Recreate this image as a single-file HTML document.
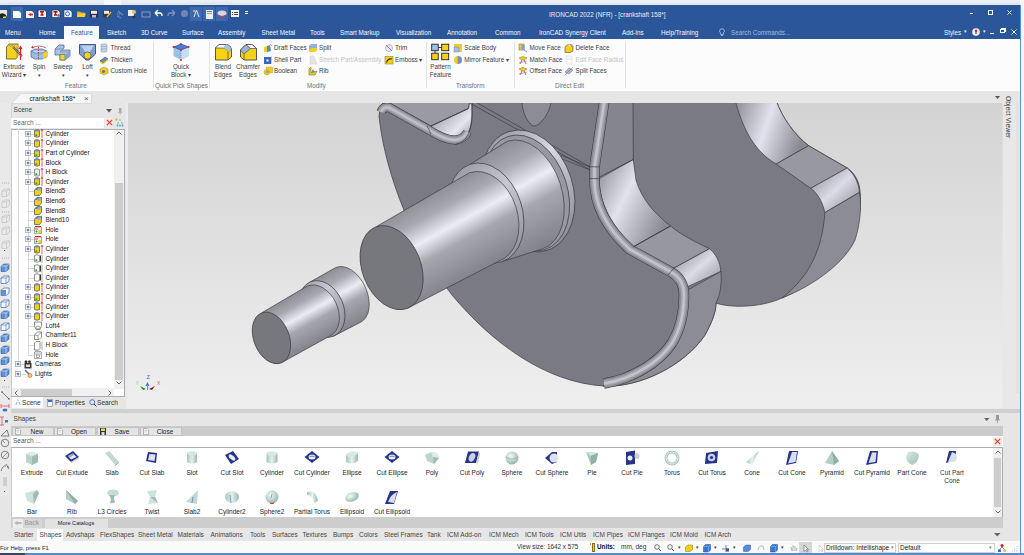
<!DOCTYPE html>
<html><head><meta charset="utf-8">
<style>
*{margin:0;padding:0;box-sizing:border-box}
html,body{width:1024px;height:555px;overflow:hidden;background:#e6e6e6;font-family:"Liberation Sans",sans-serif;font-size:6.2px;color:#333}
.a{position:absolute}
.t{position:absolute;white-space:nowrap;line-height:10px}
svg{overflow:visible}
</style></head><body>
<div class="a" style="left:0px;top:0px;width:1024px;height:5px;background:linear-gradient(#eef2f6,#dce4ec);"></div><div class="a" style="left:104px;top:0px;width:17px;height:4.5px;background:#f6f8fa;"></div><div class="a" style="left:0px;top:5px;width:1020px;height:34px;background:#2b579a;"></div><div class="a" style="left:1020px;top:0px;width:4px;height:555px;background:#f3f5f7;"></div><div class="a" style="left:1020px;top:5px;width:1px;height:550px;background:#5b8fd4;"></div><div class="a" style="left:11px;top:6.5px;width:12px;height:14.5px;background:#3d6aae;"></div><div class="a" style="left:190px;top:6.5px;width:12px;height:14.5px;background:#3d6aae;"></div><div class="a" style="left:203px;top:6.5px;width:12px;height:14.5px;background:#3d6aae;"></div><div class="a" style="left:216px;top:6.5px;width:12px;height:14.5px;background:#3d6aae;"></div><svg class="a" style="left:0px;top:10px;" width="7" height="8" viewBox="0 0 7 8"><rect x="0" y="0" width="7" height="8" fill="#e8e4d8"/><path d="M0 4 Q3 2 6 5 L7 8 H0Z" fill="#222"/><rect x="3" y="6.5" width="3" height="1.5" fill="#e8c840"/></svg><svg class="a" style="left:13px;top:10.5px;" width="8" height="7" viewBox="0 0 8 7"><path d="M0 0 H6 L8 2 V7 H0Z" fill="#fafafa"/></svg><svg class="a" style="left:26px;top:10.5px;" width="8" height="7" viewBox="0 0 8 7"><path d="M0 0 H6 L8 2 V7 H0Z" fill="#f2eee8"/><path d="M2 3.5 L5 2 V5Z" fill="#e02020"/><rect x="4.5" y="2.8" width="2.5" height="1.5" fill="#e02020"/></svg><svg class="a" style="left:38px;top:10px;" width="8.5" height="7.5" viewBox="0 0 8.5 7.5"><path d="M0 0 H6.5 L8.5 2 V7.5 H0Z" fill="#fafafa" stroke="#1c2a70" stroke-width="0.8"/><path d="M2 1.8 H6 M4 1.8 V5 M2.5 5 H5.5" stroke="#b01010" stroke-width="1.4"/></svg><svg class="a" style="left:51.5px;top:10px;" width="8" height="7.5" viewBox="0 0 8 7.5"><path d="M0 0 H6 L8 2 V7.5 H0Z" fill="#f4f4f4" stroke="#1c2a70" stroke-width="0.6"/><path d="M1.5 1.8 H5.5 M3.5 1.8 V5 M2 5 H5" stroke="#b01010" stroke-width="1.4"/><circle cx="6.5" cy="5.5" r="1.3" fill="#666"/></svg><svg class="a" style="left:64px;top:10px;" width="8" height="7.5" viewBox="0 0 8 7.5"><path d="M0 0 H6 L8 2 V7.5 H0Z" fill="#f4f6fa" stroke="#1c2a70" stroke-width="0.6"/><circle cx="3.5" cy="3.8" r="2" fill="none" stroke="#2a6ad8" stroke-width="1"/></svg><svg class="a" style="left:76.5px;top:11px;" width="9" height="6" viewBox="0 0 9 6"><path d="M0 0.5 H3 L4 1.5 H7.5 V6 H0Z" fill="#d8b020"/><path d="M1 2.5 H9 L7.5 6 H0Z" fill="#f6d030"/></svg><svg class="a" style="left:90px;top:10px;" width="8" height="7.5" viewBox="0 0 8 7.5"><rect x="0" y="0" width="8" height="7.5" fill="#2a2f55"/><rect x="1" y="0.8" width="6" height="3" fill="#f0f0f0"/><rect x="2" y="5" width="4" height="2.5" fill="#bbb"/></svg><svg class="a" style="left:103px;top:10px;" width="8" height="7.5" viewBox="0 0 8 7.5"><rect x="0" y="0" width="7" height="7.5" fill="#3a3a48"/><rect x="1" y="0.8" width="5" height="3" fill="#f0f0f0"/><path d="M4 7 L8 2" stroke="#e8c030" stroke-width="1.4"/></svg><svg class="a" style="left:116px;top:9.5px;" width="8" height="9" viewBox="0 0 8 9"><path d="M2 1 L7 5 M1 6 L5 8" stroke="#6f86bc" stroke-width="1.3"/><circle cx="2.5" cy="4" r="1.3" fill="none" stroke="#6f86bc" stroke-width="0.7"/></svg><svg class="a" style="left:128px;top:9px;" width="10" height="10" viewBox="0 0 10 10"><rect x="0" y="1" width="6" height="6" fill="#e8eef6"/><circle cx="6" cy="3" r="2" fill="#f0c040"/><circle cx="6" cy="8" r="1.5" fill="#333"/></svg><svg class="a" style="left:142px;top:10px;" width="9" height="8" viewBox="0 0 9 8"><rect x="0" y="2" width="8" height="5" fill="none" stroke="#8a9cbc" stroke-width="1"/></svg><svg class="a" style="left:154px;top:9px;" width="9" height="9" viewBox="0 0 9 9"><path d="M1 4 L4 1 M1 4 L4 7 M1 4 H6 Q8 4 8 7" fill="none" stroke="#fff" stroke-width="1.3"/></svg><svg class="a" style="left:167px;top:9px;" width="9" height="9" viewBox="0 0 9 9"><path d="M8 4 L5 1 M8 4 L5 7 M8 4 H3 Q1 4 1 7" fill="none" stroke="#7b93bd" stroke-width="1.3"/></svg><svg class="a" style="left:180px;top:9px;" width="9" height="9" viewBox="0 0 9 9"><circle cx="4.5" cy="4.5" r="3.5" fill="#6f86ae"/></svg><svg class="a" style="left:193px;top:9px;" width="7" height="9" viewBox="0 0 7 9"><path d="M3.5 1 L1 8 M3.5 1 L6 8" stroke="#dfe8f4" stroke-width="1" fill="none"/><circle cx="1" cy="2" r="1" fill="#f5c542"/></svg><div class="a" style="left:206px;top:9.5px;width:7px;height:9px;background:#eeeeee;"></div><div class="a" style="left:207px;top:11px;width:5px;height:1px;background:#777;"></div><div class="a" style="left:207px;top:13px;width:5px;height:1px;background:#999;"></div><svg class="a" style="left:217px;top:9px;" width="10" height="9" viewBox="0 0 10 9"><ellipse cx="5" cy="4.5" rx="4.5" ry="3" fill="#cfd8ea"/><path d="M1 6 Q5 9 9 6" stroke="#d33" stroke-width="1.2" fill="none"/></svg><div class="a" style="left:231px;top:10px;width:8px;height:7px;background:#f2f2f2;"></div><div class="a" style="left:232px;top:12px;width:1px;height:1px;background:#444;"></div><div class="a" style="left:234px;top:12px;width:4px;height:1px;background:#444;"></div><div class="a" style="left:232px;top:14px;width:1px;height:1px;background:#444;"></div><div class="a" style="left:234px;top:14px;width:4px;height:1px;background:#444;"></div><div class="a" style="left:245px;top:11px;width:3px;height:1px;background:#fff;"></div><div class="a" style="left:245px;top:13px;width:3px;height:1px;background:#fff;"></div><div class="t" style="left:549px;top:10.0px;color:#e6ecf5;font-size:6.3px;">IRONCAD 2022 (NFR) - [crankshaft 158*]</div><div class="a" style="left:969.5px;top:13px;width:3.5px;height:1px;background:#fff;"></div><div class="a" style="left:987.5px;top:9.5px;width:5.5px;height:5px;border:1px solid #fff"></div><svg class="a" style="left:1006.5px;top:10px;" width="5" height="5" viewBox="0 0 5 5"><path d="M0.5 0.5 L4.5 4.5 M4.5 0.5 L0.5 4.5" stroke="#fff" stroke-width="0.9"/></svg><div class="a" style="left:63.5px;top:25.5px;width:35px;height:13.5px;background:#fcfcfc;"></div><div class="t" style="left:5px;top:27.5px;color:#f6f8fc;font-size:6.3px;">Menu</div><div class="t" style="left:39px;top:27.5px;color:#f6f8fc;font-size:6.3px;">Home</div><div class="t" style="left:107px;top:27.5px;color:#f6f8fc;font-size:6.3px;">Sketch</div><div class="t" style="left:141px;top:27.5px;color:#f6f8fc;font-size:6.3px;">3D Curve</div><div class="t" style="left:182px;top:27.5px;color:#f6f8fc;font-size:6.3px;">Surface</div><div class="t" style="left:218px;top:27.5px;color:#f6f8fc;font-size:6.3px;">Assembly</div><div class="t" style="left:261.5px;top:27.5px;color:#f6f8fc;font-size:6.3px;">Sheet Metal</div><div class="t" style="left:310px;top:27.5px;color:#f6f8fc;font-size:6.3px;">Tools</div><div class="t" style="left:340px;top:27.5px;color:#f6f8fc;font-size:6.3px;">Smart Markup</div><div class="t" style="left:396px;top:27.5px;color:#f6f8fc;font-size:6.3px;">Visualization</div><div class="t" style="left:447px;top:27.5px;color:#f6f8fc;font-size:6.3px;">Annotation</div><div class="t" style="left:495px;top:27.5px;color:#f6f8fc;font-size:6.3px;">Common</div><div class="t" style="left:539px;top:27.5px;color:#f6f8fc;font-size:6.3px;">IronCAD Synergy Client</div><div class="t" style="left:622px;top:27.5px;color:#f6f8fc;font-size:6.3px;">Add-Ins</div><div class="t" style="left:661px;top:27.5px;color:#f6f8fc;font-size:6.3px;">Help/Training</div><div class="t" style="left:71px;top:27.5px;color:#2b579a;font-size:6.3px;">Feature</div><svg class="a" style="left:719px;top:28px;" width="6" height="9" viewBox="0 0 6 9"><path d="M3 0.8 A2.2 2.2 0 0 1 4.6 4.7 L4.3 6.5 H1.7 L1.4 4.7 A2.2 2.2 0 0 1 3 0.8 Z M2 7.5 H4" fill="none" stroke="#cbd6e8" stroke-width="0.7"/></svg><div class="t" style="left:731px;top:27.5px;color:#aabbd6;font-size:6.3px;">Search Commands...</div><div class="t" style="left:944px;top:27.5px;color:#eef2f8;font-size:6.3px;">Styles</div><div class="t" style="left:964px;top:26.0px;color:#eef2f8;font-size:5px;">▾</div><svg class="a" style="left:972px;top:28px;" width="8" height="8" viewBox="0 0 8 8"><circle cx="4" cy="4" r="3.8" fill="#f4f4f4"/><path d="M4 2 V6" stroke="#d22" stroke-width="1.3"/><circle cx="4" cy="2.8" r="1.3" fill="#d22"/></svg><div class="t" style="left:983px;top:26.0px;color:#eef2f8;font-size:5px;">▾</div><div class="a" style="left:990px;top:33px;width:4px;height:1px;background:#fff;"></div><div class="a" style="left:1000px;top:29px;width:5px;height:4px;border:1px solid #fff;box-shadow:1px -1px 0 0 #fff"></div><svg class="a" style="left:1011px;top:29px;" width="6" height="6" viewBox="0 0 6 6"><path d="M0.5 0.5 L5.5 5.5 M5.5 0.5 L0.5 5.5" stroke="#fff" stroke-width="1"/></svg><div class="a" style="left:0px;top:39px;width:1020px;height:52px;background:#fcfcfc;"></div><div class="a" style="left:152.5px;top:42px;width:1px;height:46px;background:#e2e2e2;"></div><div class="a" style="left:208.5px;top:42px;width:1px;height:46px;background:#e2e2e2;"></div><div class="a" style="left:425.5px;top:42px;width:1px;height:46px;background:#e2e2e2;"></div><div class="a" style="left:513.5px;top:42px;width:1px;height:46px;background:#e2e2e2;"></div><div class="a" style="left:624.7px;top:42px;width:1px;height:46px;background:#e2e2e2;"></div><div class="t" style="left:65px;top:80.5px;color:#707070;font-size:6.3px;">Feature</div><div class="t" style="left:155px;top:80.5px;color:#707070;font-size:6.3px;">Quick Pick Shapes</div><div class="t" style="left:307px;top:80.5px;color:#707070;font-size:6.3px;">Modify</div><div class="t" style="left:456px;top:80.5px;color:#707070;font-size:6.3px;">Transform</div><div class="t" style="left:555px;top:80.5px;color:#707070;font-size:6.3px;">Direct Edit</div><svg class="a" style="left:5px;top:43px;" width="20" height="18" viewBox="0 0 20 18"><path d="M1.5 4 L4 1 H13 V13 L11 16 H1.5 Z" fill="#f6d117" stroke="#5a5030" stroke-width="0.8"/><path d="M11 4 V16 L13 13 V1 Z" fill="#d9b514"/><path d="M4 1 L5.5 4 L7 2 L8.5 4 L10 2" stroke="#9c9ca8" fill="none" stroke-width="0.8"/><path d="M8 4 L17 13" stroke="#555" stroke-width="2"/><path d="M8 4 L17 13" stroke="#aaa" stroke-width="0.8"/><path d="M15.5 17 V4" stroke="#e02020" stroke-width="1.2"/><path d="M13.5 6 L15.5 2.5 L17.5 6 Z" fill="#e02020"/></svg><svg class="a" style="left:30px;top:44px;" width="18" height="17" viewBox="0 0 18 17"><path d="M2 4 Q9 0 16 4" stroke="#c96a5a" stroke-width="1" fill="none"/><path d="M1 3.5 L3 1.8 L3.5 4.5Z" fill="#c02020"/><path d="M1 7 L5 5 H12 L17 7 V13 L12 15 H5 L1 13 Z" fill="#9cbde2" stroke="#4a5f88" stroke-width="0.7"/><path d="M1 7 L5 9 H12 L17 7" fill="#c6daf2" stroke="#4a5f88" stroke-width="0.6"/><path d="M13 9 L17 7 V13 L13 15Z" fill="#f2d020"/><path d="M8.5 3 V16" stroke="#b03030" stroke-width="0.8" stroke-dasharray="1.5 1"/></svg><svg class="a" style="left:54px;top:43px;" width="18" height="18" viewBox="0 0 18 18"><path d="M1 6 L5 2 H10 V5 L8 7 H16 V13 L11 17 H6 V12 H1 Z" fill="#a9c4e6" stroke="#4a5f88" stroke-width="0.7"/><path d="M1 6 H9 L6 9 H16" fill="none" stroke="#6b82aa" stroke-width="0.6"/><rect x="6" y="11.5" width="5" height="5.5" fill="#f5d320" stroke="#4a5f88" stroke-width="0.6"/><path d="M11 12 L16 8 V13 L11 17Z" fill="#7fa2d2"/></svg><svg class="a" style="left:78px;top:43px;" width="19" height="18" viewBox="0 0 19 18"><path d="M1.5 1.5 H17.5 V11 L11 17 H8 L1.5 11 Z" fill="#7da0d0" stroke="#3a4a74" stroke-width="0.9"/><path d="M3 2.5 H16 L10.5 11 H8.5 Z" fill="#b9d3ef"/><circle cx="9.5" cy="12.5" r="3.6" fill="#f5d320" stroke="#3a4a74" stroke-width="0.7"/></svg><svg class="a" style="left:172px;top:43px;" width="18" height="18" viewBox="0 0 18 18"><path d="M1.5 4 L9 1 L16.5 4 V13 L9 17 L1.5 13 Z" fill="#9cc0ea"/><path d="M9 7 V17 L16.5 13 V4Z" fill="#c9ddf4"/><path d="M1.5 4 L9 1 L16.5 4 L9 7 Z" fill="#4f7cd0" stroke="#243d78" stroke-width="0.6"/><circle cx="1.5" cy="4" r="1" fill="#e02020"/><circle cx="9" cy="1" r="1" fill="#e02020"/><circle cx="16.5" cy="4" r="1" fill="#e02020"/><circle cx="9" cy="7" r="1" fill="#e02020"/><circle cx="9" cy="17" r="1" fill="#e02020"/><path d="M9 8 V16" stroke="#4a6db0" stroke-width="0.6" stroke-dasharray="1 1"/></svg><svg class="a" style="left:214px;top:43px;" width="19" height="18" viewBox="0 0 19 18"><path d="M1.5 5 L5 1.5 H12 Q17.5 2 17.5 8 V14 L14 17 H1.5 Z" fill="#f6d117" stroke="#333" stroke-width="0.8"/><path d="M1.5 5 L5 1.5 H12 Q16 2 17 6 L14 9.5 Q13 5 9 5 Z" fill="#fff" stroke="#333" stroke-width="0.6"/><path d="M9 5 Q13 5 14 9.5 L17 6 Q16 2 12 1.5 Z" fill="#a7c4e4"/><path d="M14 9.5 V17" stroke="#333" stroke-width="0.6"/></svg><svg class="a" style="left:239px;top:43px;" width="19" height="18" viewBox="0 0 19 18"><path d="M1.5 7 L7 1.5 H13 L17.5 5.5 V17 H5 L1.5 14 Z" fill="#f6d117" stroke="#333" stroke-width="0.8"/><path d="M1.5 7 L7 1.5 L11.5 5.5 L5 11 Z" fill="#98b7dc" stroke="#333" stroke-width="0.6"/><path d="M7 1.5 H13 L17.5 5.5 H11.5 Z" fill="#fff" stroke="#333" stroke-width="0.6"/><path d="M5 11 V17" stroke="#333" stroke-width="0.6"/></svg><svg class="a" style="left:431px;top:43px;" width="19" height="18" viewBox="0 0 19 18"><rect x="0.7" y="1.2" width="6.5" height="6.5" fill="#9fc0e6" stroke="#222" stroke-width="0.9"/><rect x="10.7" y="1.2" width="7" height="6.5" fill="#f6d117" stroke="#222" stroke-width="0.9"/><rect x="0.7" y="10.2" width="6.5" height="6.5" fill="#f6d117" stroke="#222" stroke-width="0.9"/><rect x="10.7" y="10.2" width="7" height="6.5" fill="#f6d117" stroke="#222" stroke-width="0.9"/><path d="M7.2 4.5 H10.7 M4 7.7 V10.2" stroke="#222" stroke-width="0.9"/></svg><div class="t" style="left:-86px;width:200px;text-align:center;top:61.8px;color:#3c3c3c;font-size:6.3px;">Extrude</div><div class="t" style="left:-86px;width:200px;text-align:center;top:69.6px;color:#3c3c3c;font-size:6.3px;">Wizard ▾</div><div class="t" style="left:-61px;width:200px;text-align:center;top:61.8px;color:#3c3c3c;font-size:6.3px;">Spin</div><div class="t" style="left:-61px;width:200px;text-align:center;top:69.6px;color:#3c3c3c;font-size:5px;">▾</div><div class="t" style="left:-37px;width:200px;text-align:center;top:61.8px;color:#3c3c3c;font-size:6.3px;">Sweep</div><div class="t" style="left:-37px;width:200px;text-align:center;top:69.6px;color:#3c3c3c;font-size:5px;">▾</div><div class="t" style="left:-12.5px;width:200px;text-align:center;top:61.8px;color:#3c3c3c;font-size:6.3px;">Loft</div><div class="t" style="left:-12.5px;width:200px;text-align:center;top:69.6px;color:#3c3c3c;font-size:5px;">▾</div><div class="t" style="left:81px;width:200px;text-align:center;top:61.8px;color:#3c3c3c;font-size:6.3px;">Quick</div><div class="t" style="left:81px;width:200px;text-align:center;top:69.6px;color:#3c3c3c;font-size:6.3px;">Block ▾</div><div class="t" style="left:123px;width:200px;text-align:center;top:61.8px;color:#3c3c3c;font-size:6.3px;">Blend</div><div class="t" style="left:123px;width:200px;text-align:center;top:69.6px;color:#3c3c3c;font-size:6.3px;">Edges</div><div class="t" style="left:148px;width:200px;text-align:center;top:61.8px;color:#3c3c3c;font-size:6.3px;">Chamfer</div><div class="t" style="left:148px;width:200px;text-align:center;top:69.6px;color:#3c3c3c;font-size:6.3px;">Edges</div><div class="t" style="left:340.5px;width:200px;text-align:center;top:61.8px;color:#3c3c3c;font-size:6.3px;">Pattern</div><div class="t" style="left:340.5px;width:200px;text-align:center;top:69.6px;color:#3c3c3c;font-size:6.3px;">Feature</div><svg class="a" style="left:100px;top:43.8px;" width="8" height="8" viewBox="0 0 8 8"><rect x="1" y="0" width="6" height="8" rx="1" fill="#c8d6e8" stroke="#8aa0c0" stroke-width="0.6"/><path d="M1 2.5H7M1 5H7" stroke="#8aa0c0" stroke-width="0.6"/></svg><div class="t" style="left:110.5px;top:42.8px;color:#3c3c3c;font-size:6.3px;">Thread</div><svg class="a" style="left:100px;top:55.6px;" width="8" height="8" viewBox="0 0 8 8"><path d="M0 5 L5 1 L8 3 L3 7Z" fill="#6b88c0" stroke="#334" stroke-width="0.5"/><path d="M0 5 L3 7 L8 3 V4.5 L3 8.5 L0 6.5Z" fill="#f2cf1a"/></svg><div class="t" style="left:110.5px;top:54.6px;color:#3c3c3c;font-size:6.3px;">Thicken</div><svg class="a" style="left:100px;top:67.3px;" width="8" height="8" viewBox="0 0 8 8"><path d="M0 2 L4 0 L8 2 V6 L4 8 L0 6Z" fill="#f2cf1a" stroke="#a88a10" stroke-width="0.5"/><circle cx="3.5" cy="4.5" r="1.6" fill="#4a78c0"/></svg><div class="t" style="left:110.5px;top:66.3px;color:#3c3c3c;font-size:6.3px;">Custom Hole</div><svg class="a" style="left:263.5px;top:43.8px;" width="8" height="8" viewBox="0 0 8 8"><path d="M0 3 L3 2 V8 H0Z" fill="#f2cf1a"/><path d="M3 2 L6 1 L7 7 L3 8Z" fill="#5f86c8"/><path d="M6 0 L8 2" stroke="#e04040" stroke-width="0.6"/></svg><div class="t" style="left:274.0px;top:42.8px;color:#3c3c3c;font-size:6.3px;">Draft Faces</div><svg class="a" style="left:263.5px;top:55.6px;" width="8" height="8" viewBox="0 0 8 8"><rect x="0" y="1" width="7" height="7" fill="#3a66b8"/><rect x="2.5" y="3.5" width="2" height="2" fill="#fff"/><path d="M7 1 L8 0 V7 L7 8Z" fill="#f2cf1a"/></svg><div class="t" style="left:274.0px;top:54.6px;color:#3c3c3c;font-size:6.3px;">Shell Part</div><svg class="a" style="left:263.5px;top:67.3px;" width="8" height="8" viewBox="0 0 8 8"><rect x="2.5" y="0" width="6" height="6" fill="#f2cf1a" stroke="#a88a10" stroke-width="0.4"/><circle cx="2.8" cy="5.2" r="2.8" fill="#f2cf1a" stroke="#a88a10" stroke-width="0.4"/><circle cx="3.3" cy="4.8" r="1.4" fill="#7aa0d8"/></svg><div class="t" style="left:274.0px;top:66.3px;color:#3c3c3c;font-size:6.3px;">Boolean</div><svg class="a" style="left:308.5px;top:43.8px;" width="8" height="8" viewBox="0 0 8 8"><path d="M0 2 L2 0 H8 V6 L6 8 H0Z" fill="#8fb0e0"/><path d="M0 5 Q3 3.5 8 4 V6 L6 8 H0Z" fill="#f2cf1a"/></svg><div class="t" style="left:319.0px;top:42.8px;color:#3c3c3c;font-size:6.3px;">Split</div><svg class="a" style="left:308.5px;top:55.6px;" width="8" height="8" viewBox="0 0 8 8"><path d="M1 0 H5 L8 8 H1Z" fill="#e4e4e4" stroke="#d0d0d0" stroke-width="0.5"/></svg><div class="t" style="left:319.0px;top:54.6px;color:#c4c4c4;font-size:6.3px;">Stretch Part/Assembly</div><svg class="a" style="left:308.5px;top:67.3px;" width="8" height="8" viewBox="0 0 8 8"><path d="M0 8 V2 L2 0 V6 L8 4 L6 8Z" fill="#f2cf1a" stroke="#6a5a20" stroke-width="0.5"/><path d="M2 6 L4 2 L6 5Z" fill="#6a8ad0"/></svg><div class="t" style="left:319.0px;top:66.3px;color:#3c3c3c;font-size:6.3px;">Rib</div><svg class="a" style="left:384.5px;top:43.8px;" width="8" height="8" viewBox="0 0 8 8"><circle cx="4" cy="4" r="3.5" fill="#e8eef6" stroke="#8a98b0" stroke-width="0.6"/><path d="M1 1 L7 7" stroke="#c03030" stroke-width="0.7"/></svg><div class="t" style="left:395.0px;top:42.8px;color:#3c3c3c;font-size:6.3px;">Trim</div><svg class="a" style="left:384.5px;top:55.6px;" width="8" height="8" viewBox="0 0 8 8"><rect x="0" y="0.5" width="8" height="7.5" fill="#f2cf1a" stroke="#8a7010" stroke-width="0.5"/><path d="M1.5 6.5 Q3 2 7 3" stroke="#333" stroke-width="1.2" fill="none"/></svg><div class="t" style="left:395.0px;top:54.6px;color:#3c3c3c;font-size:6.3px;">Emboss  ▾</div><svg class="a" style="left:453.8px;top:43.8px;" width="8" height="8" viewBox="0 0 8 8"><rect x="0" y="0" width="8" height="8" fill="#f2cf1a"/><rect x="0" y="3" width="5" height="5" fill="#9fc0e6" stroke="#5a7ab0" stroke-width="0.4"/></svg><div class="t" style="left:464.3px;top:42.8px;color:#3c3c3c;font-size:6.3px;">Scale Body</div><svg class="a" style="left:453.8px;top:55.6px;" width="8" height="8" viewBox="0 0 8 8"><path d="M4 0 A4 4 0 0 0 4 8Z" fill="#f2cf1a"/><path d="M4 0 A4 4 0 0 1 4 8Z" fill="#6f94cc"/><path d="M4 0 V8" stroke="#c07070" stroke-width="0.6"/></svg><div class="t" style="left:464.3px;top:54.6px;color:#3c3c3c;font-size:6.3px;">Mirror Feature  ▾</div><svg class="a" style="left:519px;top:43.8px;" width="8" height="8" viewBox="0 0 8 8"><rect x="0" y="0" width="5" height="6" fill="#f2cf1a" stroke="#5a6a90" stroke-width="0.5"/><rect x="2.5" y="1" width="3" height="5" fill="#7aa0d8"/><path d="M5 6 L8 8" stroke="#c04040" stroke-width="0.7"/></svg><div class="t" style="left:529.5px;top:42.8px;color:#3c3c3c;font-size:6.3px;">Move Face</div><svg class="a" style="left:519px;top:55.6px;" width="8" height="8" viewBox="0 0 8 8"><path d="M0 2 Q4 -1 8 2 L5 4 H3Z" fill="#f2cf1a" stroke="#6a5a20" stroke-width="0.4"/><path d="M3 4 L1 8 M5 4 L7 8" stroke="#c03030" stroke-width="0.8"/><path d="M0 7 L8 5" stroke="#6a8ad0" stroke-width="0.6"/></svg><div class="t" style="left:529.5px;top:54.6px;color:#3c3c3c;font-size:6.3px;">Match Face</div><svg class="a" style="left:519px;top:67.3px;" width="8" height="8" viewBox="0 0 8 8"><path d="M0 2 Q4 -1 8 2 L5 4 H3Z" fill="#f2cf1a" stroke="#6a5a20" stroke-width="0.4"/><path d="M3 4 L1 8 M5 4 L7 8" stroke="#c03030" stroke-width="0.8"/><path d="M0 7 L8 5" stroke="#6a8ad0" stroke-width="0.6"/></svg><div class="t" style="left:529.5px;top:66.3px;color:#3c3c3c;font-size:6.3px;">Offset Face</div><svg class="a" style="left:565px;top:43.8px;" width="8" height="8" viewBox="0 0 8 8"><path d="M0 3 L3 0.5 H7 L8 2 V7 L5 8.5 H0Z" fill="#f2cf1a" stroke="#333" stroke-width="0.5"/><path d="M3 0.5 L6 0 L8 2 L5 3Z" fill="#e0e0e0"/><path d="M5 0 L7 3" stroke="#c03030" stroke-width="0.7"/></svg><div class="t" style="left:575.5px;top:42.8px;color:#3c3c3c;font-size:6.3px;">Delete Face</div><svg class="a" style="left:565px;top:55.6px;" width="8" height="8" viewBox="0 0 8 8"><rect x="1" y="0" width="6" height="8" rx="1.5" fill="none" stroke="#d8d8d8" stroke-width="0.7"/><path d="M1 3H7" stroke="#d8d8d8" stroke-width="0.6"/></svg><div class="t" style="left:575.5px;top:54.6px;color:#c4c4c4;font-size:6.3px;">Edit Face Radius</div><svg class="a" style="left:565px;top:67.3px;" width="8" height="8" viewBox="0 0 8 8"><path d="M0 5 L4 1 L8 3 L4 7Z" fill="#9fb8dc" stroke="#5a70a0" stroke-width="0.5"/><path d="M0 8 L8 0" stroke="#e04040" stroke-width="0.6"/></svg><div class="t" style="left:575.5px;top:66.3px;color:#3c3c3c;font-size:6.3px;">Split Faces</div><div class="a" style="left:0px;top:92px;width:1020px;height:463px;background:#e6e6e6;"></div><svg class="a" style="left:11px;top:93px;" width="82" height="11" viewBox="0 0 82 11"><path d="M0.5 10.5 L10 0.5 H80.5 V10.5 Z" fill="#f7f7f7" stroke="#d6d6d6" stroke-width="0.8"/></svg><div class="t" style="left:29.5px;top:93.7px;color:#1a1a1a;font-size:6.6px;">crankshaft 158*</div><div class="t" style="left:84px;top:93.5px;color:#555;font-size:8px;">×</div><div class="a" style="left:0px;top:103px;width:11px;height:393px;background:#e9e9e9;"></div><div class="a" style="left:10.5px;top:103px;width:0.6px;height:393px;background:#d6d6d6;"></div><svg class="a" style="left:1px;top:182px;" width="9" height="2" viewBox="0 0 9 2"><path d="M1 1 H8" stroke="#9a9a9a" stroke-width="0.7" stroke-dasharray="1 1"/></svg><svg class="a" style="left:1px;top:188px;" width="9" height="9" viewBox="0 0 9 9"><path d="M1 3 L4 1 H8.5 V6 L5.5 8.5 H1 Z M1 3 H5.5 V8.5 M5.5 3 L8.5 1" fill="none" stroke="#c4c4c4" stroke-width="0.7"/></svg><svg class="a" style="left:1px;top:199px;" width="9" height="9" viewBox="0 0 9 9"><path d="M1 3 L4 1 H8.5 V6 L5.5 8.5 H1 Z M1 3 H5.5 V8.5 M5.5 3 L8.5 1" fill="none" stroke="#c4c4c4" stroke-width="0.7"/></svg><svg class="a" style="left:1px;top:211px;" width="9" height="2" viewBox="0 0 9 2"><path d="M1 1 H8" stroke="#9a9a9a" stroke-width="0.7" stroke-dasharray="1 1"/></svg><svg class="a" style="left:1px;top:214px;" width="9" height="9" viewBox="0 0 9 9"><path d="M1 3 L4 1 H8.5 V6 L5.5 8.5 H1 Z M1 3 H5.5 V8.5 M5.5 3 L8.5 1" fill="none" stroke="#c4c4c4" stroke-width="0.7"/></svg><svg class="a" style="left:1px;top:226px;" width="9" height="9" viewBox="0 0 9 9"><path d="M1 3 L4 1 H8.5 V6 L5.5 8.5 H1 Z M1 3 H5.5 V8.5 M5.5 3 L8.5 1" fill="none" stroke="#c4c4c4" stroke-width="0.7"/></svg><svg class="a" style="left:1px;top:240px;" width="9" height="9" viewBox="0 0 9 9"><path d="M1 3 L4 1 H8.5 V6 L5.5 8.5 H1 Z M1 3 H5.5 V8.5 M5.5 3 L8.5 1" fill="none" stroke="#c4c4c4" stroke-width="0.7"/></svg><div class="a" style="left:4px;top:250px;width:1px;height:1px;background:#555;"></div><svg class="a" style="left:1px;top:257px;" width="9" height="2" viewBox="0 0 9 2"><path d="M1 1 H8" stroke="#9a9a9a" stroke-width="0.7" stroke-dasharray="1 1"/></svg><svg class="a" style="left:0px;top:263px;" width="10" height="9" viewBox="0 0 10 9"><path d="M1 3 L4 1 H9 V6 L6 8.5 H1 Z" fill="#5d90d8" stroke="#2e5aa0" stroke-width="0.6"/><path d="M1 3 H6 V8.5 M6 3 L9 1" stroke="#e8f0fa" stroke-width="0.6" fill="none"/></svg><svg class="a" style="left:0px;top:275px;" width="10" height="9" viewBox="0 0 10 9"><path d="M1 3 L4 1 H9 V6 L6 8.5 H1 Z" fill="#f4f8fc" stroke="#3e6ab0" stroke-width="0.7"/><path d="M1 3 H6 V8.5 M6 3 L9 1" stroke="#3e6ab0" stroke-width="0.6" fill="none"/></svg><svg class="a" style="left:0px;top:287px;" width="10" height="9" viewBox="0 0 10 9"><path d="M1 3 L4 1 H9 V6 L6 8.5 H1 Z" fill="#f4f8fc" stroke="#3e6ab0" stroke-width="0.7"/><path d="M1 3 H6 V8.5 H1Z" fill="#5d90d8"/></svg><svg class="a" style="left:0px;top:299px;" width="10" height="9" viewBox="0 0 10 9"><path d="M1 3 L4 1 H9 V6 L6 8.5 H1 Z" fill="#f4f8fc" stroke="#3e6ab0" stroke-width="0.7"/><path d="M1 3 H6 V8.5 M6 3 L9 1" stroke="#3e6ab0" stroke-width="0.6" fill="none"/></svg><svg class="a" style="left:0px;top:310px;" width="10" height="9" viewBox="0 0 10 9"><path d="M1 3 L4 1 H9 V6 L6 8.5 H1 Z" fill="#5d90d8" stroke="#2e5aa0" stroke-width="0.6"/><path d="M1 3 H6 V8.5 M6 3 L9 1" stroke="#e8f0fa" stroke-width="0.6" fill="none"/></svg><svg class="a" style="left:0px;top:322px;" width="10" height="9" viewBox="0 0 10 9"><path d="M1 3 L4 1 H9 V6 L6 8.5 H1 Z" fill="#f4f8fc" stroke="#3e6ab0" stroke-width="0.7"/><path d="M1 3 H6 V8.5 M6 3 L9 1" stroke="#3e6ab0" stroke-width="0.6" fill="none"/></svg><svg class="a" style="left:0px;top:333px;" width="10" height="9" viewBox="0 0 10 9"><path d="M1 3 L4 1 H9 V6 L6 8.5 H1 Z" fill="#5d90d8" stroke="#2e5aa0" stroke-width="0.6"/><path d="M1 3 H6 V8.5 M6 3 L9 1" stroke="#e8f0fa" stroke-width="0.6" fill="none"/></svg><svg class="a" style="left:0px;top:345px;" width="10" height="9" viewBox="0 0 10 9"><path d="M1 3 L4 1 H9 V6 L6 8.5 H1 Z" fill="#5d90d8" stroke="#2e5aa0" stroke-width="0.6"/><path d="M1 3 H6 V8.5 M6 3 L9 1" stroke="#e8f0fa" stroke-width="0.6" fill="none"/></svg><svg class="a" style="left:0px;top:356px;" width="10" height="9" viewBox="0 0 10 9"><path d="M1 3 L4 1 H9 V6 L6 8.5 H1 Z" fill="#5d90d8" stroke="#2e5aa0" stroke-width="0.6"/><path d="M1 3 H6 V8.5 M6 3 L9 1" stroke="#e8f0fa" stroke-width="0.6" fill="none"/></svg><svg class="a" style="left:0px;top:368px;" width="10" height="9" viewBox="0 0 10 9"><path d="M1 3 L4 1 H9 V6 L6 8.5 H1 Z" fill="#5d90d8" stroke="#2e5aa0" stroke-width="0.6"/><path d="M1 3 H6 V8.5 M6 3 L9 1" stroke="#e8f0fa" stroke-width="0.6" fill="none"/></svg><div class="a" style="left:4px;top:380px;width:1px;height:1px;background:#555;"></div><svg class="a" style="left:1px;top:386px;" width="9" height="2" viewBox="0 0 9 2"><path d="M1 1 H8" stroke="#9a9a9a" stroke-width="0.7" stroke-dasharray="1 1"/></svg><svg class="a" style="left:1px;top:391px;" width="9" height="9" viewBox="0 0 9 9"><path d="M1 1 L8 8" stroke="#555" stroke-width="0.8"/><circle cx="1" cy="1" r="0.8" fill="#555"/><circle cx="8" cy="8" r="0.8" fill="#555"/></svg><svg class="a" style="left:0px;top:404px;" width="10" height="9" viewBox="0 0 10 9"><path d="M1 2 H9 M1 0 V4 M9 0 V4" stroke="#e04040" stroke-width="0.7"/><ellipse cx="5" cy="6" rx="2.5" ry="1.5" fill="#3a78d0"/></svg><svg class="a" style="left:0px;top:416px;" width="10" height="10" viewBox="0 0 10 10"><path d="M2 1 V9 M0 1 H4 M0 9 H4" stroke="#e04040" stroke-width="0.7"/><rect x="5" y="4" width="3" height="2.5" fill="#3a78d0"/></svg><svg class="a" style="left:0px;top:428px;" width="10" height="9" viewBox="0 0 10 9"><path d="M1 8 L7 2 L9 8 Z" fill="none" stroke="#555" stroke-width="0.7"/></svg><svg class="a" style="left:0px;top:438px;" width="10" height="10" viewBox="0 0 10 10"><circle cx="5" cy="5" r="3.8" fill="none" stroke="#555" stroke-width="0.7"/><path d="M2.5 2.5 L5 5" stroke="#555" stroke-width="0.6"/></svg><svg class="a" style="left:0px;top:450px;" width="10" height="10" viewBox="0 0 10 10"><circle cx="5" cy="5" r="3.8" fill="none" stroke="#555" stroke-width="0.7"/><path d="M2.3 7.7 L7.7 2.3" stroke="#555" stroke-width="0.6"/></svg><svg class="a" style="left:0px;top:463px;" width="10" height="9" viewBox="0 0 10 9"><path d="M1 8 Q3 2 6 3" stroke="#555" fill="none" stroke-width="0.7"/><path d="M6 1 L9 6 M7 4 H9" stroke="#333" stroke-width="0.6"/></svg><div class="a" style="left:3px;top:477px;width:4px;height:9px;background:#cfcfcf;"></div><div class="a" style="left:4px;top:491px;width:1px;height:1px;background:#555;"></div><div class="t" style="left:13.5px;top:105.3px;color:#444;font-size:6.6px;">Scene</div><svg class="a" style="left:106px;top:109px;" width="6" height="4" viewBox="0 0 6 4"><path d="M0 0 H6 L3 3.5 Z" fill="#555"/></svg><svg class="a" style="left:117.5px;top:107.5px;" width="4" height="7" viewBox="0 0 4 7"><rect x="1" y="0" width="2.5" height="4.5" fill="#aaa"/><path d="M2.2 4.5 V7 M0 4.5 H4.5" stroke="#aaa" stroke-width="0.7"/></svg><div class="a" style="left:11px;top:117.5px;width:93px;height:10px;background:#ffffff;"></div><div class="t" style="left:13px;top:117.5px;color:#666;font-size:6.5px;">Search ...</div><div class="a" style="left:104.5px;top:117.5px;width:8.5px;height:10px;background:#f3ebe4;"></div><svg class="a" style="left:105.5px;top:119px;" width="7" height="7" viewBox="0 0 7 7"><path d="M0.8 0.8 L6.2 6.2 M6.2 0.8 L0.8 6.2" stroke="#e83a3a" stroke-width="1.2"/></svg><svg class="a" style="left:115px;top:118px;" width="8" height="9" viewBox="0 0 8 9"><circle cx="1.5" cy="1.5" r="1.2" fill="#f0c020"/><path d="M5 1 V3 M3.5 4 L2.5 6.5 M6.5 4 L7.5 6.5" stroke="#5ab0c0" stroke-width="0.8"/><circle cx="2.5" cy="7.5" r="1" fill="#5ab0c0"/><circle cx="5" cy="7.5" r="1" fill="#5ab0c0"/><circle cx="7.5" cy="7.5" r="1" fill="#5ab0c0"/></svg><div class="a" style="left:11px;top:128.5px;width:114px;height:268.5px;background:#fff;border:1px solid #a9adbb;border-left-color:#c8c8c8"></div><div class="a" style="left:113.5px;top:129.5px;width:10.5px;height:259px;background:#f0f0f0;"></div><div class="a" style="left:115px;top:183px;width:8px;height:197px;background:#cdcdcd;"></div><svg class="a" style="left:116px;top:131px;" width="6" height="4" viewBox="0 0 6 4"><path d="M0.5 3.5 L3 1 L5.5 3.5" stroke="#555" stroke-width="0.9" fill="none"/></svg><svg class="a" style="left:116px;top:381px;" width="6" height="4" viewBox="0 0 6 4"><path d="M0.5 0.5 L3 3 L5.5 0.5" stroke="#555" stroke-width="0.9" fill="none"/></svg><div class="a" style="left:12px;top:388px;width:101.5px;height:8px;background:#f0f0f0;"></div><div class="a" style="left:21px;top:388.5px;width:51px;height:7px;background:#cdcdcd;"></div><svg class="a" style="left:14px;top:389.5px;" width="4" height="6" viewBox="0 0 4 6"><path d="M3.5 0.5 L1 3 L3.5 5.5" stroke="#555" stroke-width="0.9" fill="none"/></svg><svg class="a" style="left:108px;top:389.5px;" width="4" height="6" viewBox="0 0 4 6"><path d="M0.5 0.5 L3 3 L0.5 5.5" stroke="#555" stroke-width="0.9" fill="none"/></svg><div class="a" style="left:18px;top:129px;width:1px;height:235px;background:#dcdcdc;"></div><div class="a" style="left:28px;top:129px;width:1px;height:225px;background:#dcdcdc;"></div><svg class="a" style="left:25px;top:131px;" width="7" height="7" viewBox="0 0 7 7"><rect x="0.5" y="0.5" width="5" height="5" fill="#fff" stroke="#a8a8a8" stroke-width="0.8"/><path d="M1.5 3 H4.5 M3 1.5 V4.5" stroke="#2d5bb0" stroke-width="0.9"/></svg><div class="a" style="left:31px;top:134px;width:4px;height:1px;background:#d6d6d6;"></div><svg class="a" style="left:34px;top:129.3px;" width="10" height="10" viewBox="0 0 10 10"><path d="M0.5 1.5 Q3 0 5.5 1.5 V7.5 Q3 9 0.5 7.5 Z" fill="#f2cf1a" stroke="#333" stroke-width="0.6"/><ellipse cx="3" cy="1.5" rx="2.5" ry="1" fill="#6a8ad0"/><circle cx="2.3" cy="6.3" r="1" fill="#2ca02c"/><path d="M8 9 V0.5 M7 2 L8 0 L9 2" stroke="#e02020" stroke-width="0.7" fill="none"/></svg><div class="t" style="left:45.5px;top:128.8px;color:#141414;font-size:6.4px;">Cylinder</div><svg class="a" style="left:25px;top:140px;" width="7" height="7" viewBox="0 0 7 7"><rect x="0.5" y="0.5" width="5" height="5" fill="#fff" stroke="#a8a8a8" stroke-width="0.8"/><path d="M1.5 3 H4.5 M3 1.5 V4.5" stroke="#2d5bb0" stroke-width="0.9"/></svg><div class="a" style="left:31px;top:143px;width:4px;height:1px;background:#d6d6d6;"></div><svg class="a" style="left:34px;top:138.9px;" width="10" height="10" viewBox="0 0 10 10"><path d="M0.5 1.5 Q3 0 5.5 1.5 V7.5 Q3 9 0.5 7.5 Z" fill="#f2cf1a" stroke="#333" stroke-width="0.6"/><ellipse cx="3" cy="1.5" rx="2.5" ry="1" fill="#6a8ad0"/><path d="M8 9 V0.5 M7 2 L8 0 L9 2" stroke="#e02020" stroke-width="0.7" fill="none"/></svg><div class="t" style="left:45.5px;top:138.4px;color:#141414;font-size:6.4px;">Cylinder</div><svg class="a" style="left:25px;top:150px;" width="7" height="7" viewBox="0 0 7 7"><rect x="0.5" y="0.5" width="5" height="5" fill="#fff" stroke="#a8a8a8" stroke-width="0.8"/><path d="M1.5 3 H4.5 M3 1.5 V4.5" stroke="#2d5bb0" stroke-width="0.9"/></svg><div class="a" style="left:31px;top:153px;width:4px;height:1px;background:#d6d6d6;"></div><svg class="a" style="left:34px;top:148.5px;" width="10" height="10" viewBox="0 0 10 10"><path d="M0.5 1.5 Q3 0 5.5 1.5 V7.5 Q3 9 0.5 7.5 Z" fill="#f2cf1a" stroke="#333" stroke-width="0.6"/><ellipse cx="3" cy="1.5" rx="2.5" ry="1" fill="#6a8ad0"/><circle cx="2.3" cy="6.3" r="1" fill="#2ca02c"/><path d="M8 9 V0.5 M7 2 L8 0 L9 2" stroke="#e02020" stroke-width="0.7" fill="none"/></svg><div class="t" style="left:45.5px;top:148.0px;color:#141414;font-size:6.4px;">Part of Cylinder</div><svg class="a" style="left:25px;top:160px;" width="7" height="7" viewBox="0 0 7 7"><rect x="0.5" y="0.5" width="5" height="5" fill="#fff" stroke="#a8a8a8" stroke-width="0.8"/><path d="M1.5 3 H4.5 M3 1.5 V4.5" stroke="#2d5bb0" stroke-width="0.9"/></svg><div class="a" style="left:31px;top:163px;width:4px;height:1px;background:#d6d6d6;"></div><svg class="a" style="left:34px;top:158.10000000000002px;" width="10" height="10" viewBox="0 0 10 10"><path d="M0.5 1.5 Q3 0 5.5 1.5 V7.5 Q3 9 0.5 7.5 Z" fill="#f2cf1a" stroke="#333" stroke-width="0.6"/><ellipse cx="3" cy="1.5" rx="2.5" ry="1" fill="#6a8ad0"/><circle cx="2.3" cy="6.3" r="1" fill="#2ca02c"/><path d="M8 9 V0.5 M7 2 L8 0 L9 2" stroke="#e02020" stroke-width="0.7" fill="none"/></svg><div class="t" style="left:45.5px;top:157.60000000000002px;color:#141414;font-size:6.4px;">Block</div><svg class="a" style="left:25px;top:169px;" width="7" height="7" viewBox="0 0 7 7"><rect x="0.5" y="0.5" width="5" height="5" fill="#fff" stroke="#a8a8a8" stroke-width="0.8"/><path d="M1.5 3 H4.5 M3 1.5 V4.5" stroke="#2d5bb0" stroke-width="0.9"/></svg><div class="a" style="left:31px;top:172px;width:4px;height:1px;background:#d6d6d6;"></div><svg class="a" style="left:34px;top:167.70000000000002px;" width="10" height="10" viewBox="0 0 10 10"><path d="M0.5 1.5 Q3 0 5.5 1.5 V7.5 Q3 9 0.5 7.5 Z" fill="#e8e8e8" stroke="#555" stroke-width="0.6"/><circle cx="2.3" cy="6.3" r="1" fill="#2ca02c"/><path d="M8 9 V0.5 M7 2 L8 0 L9 2" stroke="#e02020" stroke-width="0.7" fill="none"/></svg><div class="t" style="left:45.5px;top:167.20000000000002px;color:#141414;font-size:6.4px;">H Block</div><svg class="a" style="left:25px;top:179px;" width="7" height="7" viewBox="0 0 7 7"><rect x="0.5" y="0.5" width="5" height="5" fill="#fff" stroke="#a8a8a8" stroke-width="0.8"/><path d="M1.5 3 H4.5 M3 1.5 V4.5" stroke="#2d5bb0" stroke-width="0.9"/></svg><div class="a" style="left:31px;top:182px;width:4px;height:1px;background:#d6d6d6;"></div><svg class="a" style="left:34px;top:177.3px;" width="10" height="10" viewBox="0 0 10 10"><path d="M0.5 1.5 Q3 0 5.5 1.5 V7.5 Q3 9 0.5 7.5 Z" fill="#f2cf1a" stroke="#333" stroke-width="0.6"/><ellipse cx="3" cy="1.5" rx="2.5" ry="1" fill="#6a8ad0"/><circle cx="2.3" cy="6.3" r="1" fill="#2ca02c"/><path d="M8 9 V0.5 M7 2 L8 0 L9 2" stroke="#e02020" stroke-width="0.7" fill="none"/></svg><div class="t" style="left:45.5px;top:176.8px;color:#141414;font-size:6.4px;">Cylinder</div><div class="a" style="left:28px;top:191px;width:6px;height:1px;background:#d6d6d6;"></div><svg class="a" style="left:34px;top:186.9px;" width="10" height="10" viewBox="0 0 10 10"><path d="M0.5 3 L3 0.5 H7.5 V6 L5.5 8.5 H0.5 Z" fill="#f2cf1a" stroke="#333" stroke-width="0.6"/><path d="M0.5 3 L3 0.5 H7.5 L5 3 Z" fill="#5a80c8"/><circle cx="5" cy="2.5" r="1.6" fill="#8fb0e0"/></svg><div class="t" style="left:45.5px;top:186.4px;color:#141414;font-size:6.4px;">Blend5</div><div class="a" style="left:28px;top:201px;width:6px;height:1px;background:#d6d6d6;"></div><svg class="a" style="left:34px;top:196.5px;" width="10" height="10" viewBox="0 0 10 10"><path d="M0.5 3 L3 0.5 H7.5 V6 L5.5 8.5 H0.5 Z" fill="#f2cf1a" stroke="#333" stroke-width="0.6"/><path d="M0.5 3 L3 0.5 H7.5 L5 3 Z" fill="#5a80c8"/><circle cx="5" cy="2.5" r="1.6" fill="#8fb0e0"/></svg><div class="t" style="left:45.5px;top:196.0px;color:#141414;font-size:6.4px;">Blend6</div><div class="a" style="left:28px;top:211px;width:6px;height:1px;background:#d6d6d6;"></div><svg class="a" style="left:34px;top:206.10000000000002px;" width="10" height="10" viewBox="0 0 10 10"><path d="M0.5 3 L3 0.5 H7.5 V6 L5.5 8.5 H0.5 Z" fill="#f2cf1a" stroke="#333" stroke-width="0.6"/><path d="M0.5 3 L3 0.5 H7.5 L5 3 Z" fill="#5a80c8"/><circle cx="5" cy="2.5" r="1.6" fill="#8fb0e0"/></svg><div class="t" style="left:45.5px;top:205.60000000000002px;color:#141414;font-size:6.4px;">Blend8</div><div class="a" style="left:28px;top:220px;width:6px;height:1px;background:#d6d6d6;"></div><svg class="a" style="left:34px;top:215.7px;" width="10" height="10" viewBox="0 0 10 10"><path d="M0.5 3 L3 0.5 H7.5 V6 L5.5 8.5 H0.5 Z" fill="#f2cf1a" stroke="#333" stroke-width="0.6"/><path d="M0.5 3 L3 0.5 H7.5 L5 3 Z" fill="#5a80c8"/><circle cx="5" cy="2.5" r="1.6" fill="#8fb0e0"/></svg><div class="t" style="left:45.5px;top:215.2px;color:#141414;font-size:6.4px;">Blend10</div><svg class="a" style="left:25px;top:227px;" width="7" height="7" viewBox="0 0 7 7"><rect x="0.5" y="0.5" width="5" height="5" fill="#fff" stroke="#a8a8a8" stroke-width="0.8"/><path d="M1.5 3 H4.5 M3 1.5 V4.5" stroke="#2d5bb0" stroke-width="0.9"/></svg><div class="a" style="left:31px;top:230px;width:4px;height:1px;background:#d6d6d6;"></div><svg class="a" style="left:34px;top:225.3px;" width="10" height="10" viewBox="0 0 10 10"><path d="M0.5 2 H7.5 V8.5 H0.5Z" fill="#f2f2f2" stroke="#555" stroke-width="0.5"/><path d="M1 1.5 H7" stroke="#d02020" stroke-width="1"/><path d="M1 4 H4" stroke="#d02020" stroke-width="0.8"/><rect x="4.5" y="5" width="2.5" height="3" fill="#f2cf1a"/><circle cx="2.5" cy="6.5" r="1" fill="#2ca02c"/></svg><div class="t" style="left:45.5px;top:224.8px;color:#141414;font-size:6.4px;">Hole</div><svg class="a" style="left:25px;top:236px;" width="7" height="7" viewBox="0 0 7 7"><rect x="0.5" y="0.5" width="5" height="5" fill="#fff" stroke="#a8a8a8" stroke-width="0.8"/><path d="M1.5 3 H4.5 M3 1.5 V4.5" stroke="#2d5bb0" stroke-width="0.9"/></svg><div class="a" style="left:31px;top:239px;width:4px;height:1px;background:#d6d6d6;"></div><svg class="a" style="left:34px;top:234.9px;" width="10" height="10" viewBox="0 0 10 10"><path d="M0.5 2 H7.5 V8.5 H0.5Z" fill="#f2f2f2" stroke="#555" stroke-width="0.5"/><path d="M1 1.5 H7" stroke="#d02020" stroke-width="1"/><path d="M1 4 H4" stroke="#d02020" stroke-width="0.8"/><rect x="4.5" y="5" width="2.5" height="3" fill="#f2cf1a"/><circle cx="2.5" cy="6.5" r="1" fill="#2ca02c"/></svg><div class="t" style="left:45.5px;top:234.4px;color:#141414;font-size:6.4px;">Hole</div><svg class="a" style="left:25px;top:246px;" width="7" height="7" viewBox="0 0 7 7"><rect x="0.5" y="0.5" width="5" height="5" fill="#fff" stroke="#a8a8a8" stroke-width="0.8"/><path d="M1.5 3 H4.5 M3 1.5 V4.5" stroke="#2d5bb0" stroke-width="0.9"/></svg><div class="a" style="left:31px;top:249px;width:4px;height:1px;background:#d6d6d6;"></div><svg class="a" style="left:34px;top:244.5px;" width="10" height="10" viewBox="0 0 10 10"><path d="M0.5 1.5 Q3 0 5.5 1.5 V7.5 Q3 9 0.5 7.5 Z" fill="#f2cf1a" stroke="#333" stroke-width="0.6"/><ellipse cx="3" cy="1.5" rx="2.5" ry="1" fill="#6a8ad0"/><circle cx="2.3" cy="6.3" r="1" fill="#2ca02c"/><path d="M8 9 V0.5 M7 2 L8 0 L9 2" stroke="#e02020" stroke-width="0.7" fill="none"/></svg><div class="t" style="left:45.5px;top:244.0px;color:#141414;font-size:6.4px;">Cylinder</div><div class="a" style="left:28px;top:259px;width:6px;height:1px;background:#d6d6d6;"></div><svg class="a" style="left:34px;top:254.10000000000002px;" width="10" height="10" viewBox="0 0 10 10"><path d="M0.5 1.5 Q3 0 5.5 1.5 V7.5 Q3 9 0.5 7.5 Z" fill="#fff" stroke="#444" stroke-width="0.6"/><circle cx="2.3" cy="6.3" r="1" fill="#2ca02c"/><path d="M6.5 1.5 V7.5" stroke="#333" stroke-width="1"/><path d="M8 9 V0.5" stroke="#555" stroke-width="0.5"/></svg><div class="t" style="left:45.5px;top:253.60000000000002px;color:#141414;font-size:6.4px;">Cylinder</div><div class="a" style="left:28px;top:268px;width:6px;height:1px;background:#d6d6d6;"></div><svg class="a" style="left:34px;top:263.70000000000005px;" width="10" height="10" viewBox="0 0 10 10"><path d="M0.5 1.5 Q3 0 5.5 1.5 V7.5 Q3 9 0.5 7.5 Z" fill="#fff" stroke="#444" stroke-width="0.6"/><circle cx="2.3" cy="6.3" r="1" fill="#2ca02c"/><path d="M6.5 1.5 V7.5" stroke="#333" stroke-width="1"/><path d="M8 9 V0.5" stroke="#555" stroke-width="0.5"/></svg><div class="t" style="left:45.5px;top:263.20000000000005px;color:#141414;font-size:6.4px;">Cylinder</div><div class="a" style="left:28px;top:278px;width:6px;height:1px;background:#d6d6d6;"></div><svg class="a" style="left:34px;top:273.3px;" width="10" height="10" viewBox="0 0 10 10"><path d="M0.5 1.5 Q3 0 5.5 1.5 V7.5 Q3 9 0.5 7.5 Z" fill="#fff" stroke="#444" stroke-width="0.6"/><path d="M6.5 1.5 V7.5" stroke="#333" stroke-width="1"/><path d="M8 9 V0.5" stroke="#555" stroke-width="0.5"/></svg><div class="t" style="left:45.5px;top:272.8px;color:#141414;font-size:6.4px;">Cylinder</div><svg class="a" style="left:25px;top:284px;" width="7" height="7" viewBox="0 0 7 7"><rect x="0.5" y="0.5" width="5" height="5" fill="#fff" stroke="#a8a8a8" stroke-width="0.8"/><path d="M1.5 3 H4.5 M3 1.5 V4.5" stroke="#2d5bb0" stroke-width="0.9"/></svg><div class="a" style="left:31px;top:287px;width:4px;height:1px;background:#d6d6d6;"></div><svg class="a" style="left:34px;top:282.9px;" width="10" height="10" viewBox="0 0 10 10"><path d="M0.5 1.5 Q3 0 5.5 1.5 V7.5 Q3 9 0.5 7.5 Z" fill="#f2cf1a" stroke="#333" stroke-width="0.6"/><ellipse cx="3" cy="1.5" rx="2.5" ry="1" fill="#6a8ad0"/><path d="M8 9 V0.5 M7 2 L8 0 L9 2" stroke="#e02020" stroke-width="0.7" fill="none"/></svg><div class="t" style="left:45.5px;top:282.4px;color:#141414;font-size:6.4px;">Cylinder</div><svg class="a" style="left:25px;top:294px;" width="7" height="7" viewBox="0 0 7 7"><rect x="0.5" y="0.5" width="5" height="5" fill="#fff" stroke="#a8a8a8" stroke-width="0.8"/><path d="M1.5 3 H4.5 M3 1.5 V4.5" stroke="#2d5bb0" stroke-width="0.9"/></svg><div class="a" style="left:31px;top:297px;width:4px;height:1px;background:#d6d6d6;"></div><svg class="a" style="left:34px;top:292.5px;" width="10" height="10" viewBox="0 0 10 10"><path d="M0.5 1.5 Q3 0 5.5 1.5 V7.5 Q3 9 0.5 7.5 Z" fill="#f2cf1a" stroke="#333" stroke-width="0.6"/><ellipse cx="3" cy="1.5" rx="2.5" ry="1" fill="#6a8ad0"/><circle cx="2.3" cy="6.3" r="1" fill="#2ca02c"/><path d="M8 9 V0.5 M7 2 L8 0 L9 2" stroke="#e02020" stroke-width="0.7" fill="none"/></svg><div class="t" style="left:45.5px;top:292.0px;color:#141414;font-size:6.4px;">Cylinder</div><svg class="a" style="left:25px;top:304px;" width="7" height="7" viewBox="0 0 7 7"><rect x="0.5" y="0.5" width="5" height="5" fill="#fff" stroke="#a8a8a8" stroke-width="0.8"/><path d="M1.5 3 H4.5 M3 1.5 V4.5" stroke="#2d5bb0" stroke-width="0.9"/></svg><div class="a" style="left:31px;top:307px;width:4px;height:1px;background:#d6d6d6;"></div><svg class="a" style="left:34px;top:302.1px;" width="10" height="10" viewBox="0 0 10 10"><path d="M0.5 1.5 Q3 0 5.5 1.5 V7.5 Q3 9 0.5 7.5 Z" fill="#f2cf1a" stroke="#333" stroke-width="0.6"/><ellipse cx="3" cy="1.5" rx="2.5" ry="1" fill="#6a8ad0"/><path d="M8 9 V0.5 M7 2 L8 0 L9 2" stroke="#e02020" stroke-width="0.7" fill="none"/></svg><div class="t" style="left:45.5px;top:301.6px;color:#141414;font-size:6.4px;">Cylinder</div><svg class="a" style="left:25px;top:313px;" width="7" height="7" viewBox="0 0 7 7"><rect x="0.5" y="0.5" width="5" height="5" fill="#fff" stroke="#a8a8a8" stroke-width="0.8"/><path d="M1.5 3 H4.5 M3 1.5 V4.5" stroke="#2d5bb0" stroke-width="0.9"/></svg><div class="a" style="left:31px;top:316px;width:4px;height:1px;background:#d6d6d6;"></div><svg class="a" style="left:34px;top:311.70000000000005px;" width="10" height="10" viewBox="0 0 10 10"><path d="M0.5 1.5 Q3 0 5.5 1.5 V7.5 Q3 9 0.5 7.5 Z" fill="#f2cf1a" stroke="#333" stroke-width="0.6"/><ellipse cx="3" cy="1.5" rx="2.5" ry="1" fill="#6a8ad0"/><path d="M8 9 V0.5 M7 2 L8 0 L9 2" stroke="#e02020" stroke-width="0.7" fill="none"/></svg><div class="t" style="left:45.5px;top:311.20000000000005px;color:#141414;font-size:6.4px;">Cylinder</div><div class="a" style="left:28px;top:326px;width:6px;height:1px;background:#d6d6d6;"></div><svg class="a" style="left:34px;top:321.3px;" width="10" height="10" viewBox="0 0 10 10"><path d="M0.5 1 H7.5 V5 L6 8.5 H2 L0.5 5Z" fill="#fff" stroke="#444" stroke-width="0.6"/><ellipse cx="4" cy="6.5" rx="2" ry="1.5" fill="none" stroke="#444" stroke-width="0.5"/></svg><div class="t" style="left:45.5px;top:320.8px;color:#141414;font-size:6.4px;">Loft4</div><div class="a" style="left:28px;top:335px;width:6px;height:1px;background:#d6d6d6;"></div><svg class="a" style="left:34px;top:330.9px;" width="10" height="10" viewBox="0 0 10 10"><path d="M0.5 4 L3.5 1 H7.5 V6 L5 8.5 H0.5Z" fill="#fff" stroke="#444" stroke-width="0.6"/><path d="M0.5 4 L4 4.5 L7.5 1 M4 4.5 V8.5" stroke="#444" stroke-width="0.5" fill="none"/></svg><div class="t" style="left:45.5px;top:330.4px;color:#141414;font-size:6.4px;">Chamfer11</div><div class="a" style="left:28px;top:345px;width:6px;height:1px;background:#d6d6d6;"></div><svg class="a" style="left:34px;top:340.5px;" width="10" height="10" viewBox="0 0 10 10"><path d="M0.5 2 L2 0.5 H6 V7.5 L4.5 9 H0.5Z" fill="#fff" stroke="#444" stroke-width="0.6"/><path d="M8 9 V0.5" stroke="#555" stroke-width="0.5"/></svg><div class="t" style="left:45.5px;top:340.0px;color:#141414;font-size:6.4px;">H Block</div><div class="a" style="left:28px;top:355px;width:6px;height:1px;background:#d6d6d6;"></div><svg class="a" style="left:34px;top:350.1px;" width="10" height="10" viewBox="0 0 10 10"><path d="M0.5 2 H7.5 V8.5 H0.5Z" fill="#fff" stroke="#555" stroke-width="0.5"/><path d="M1 1.2 H7 M1 4 H7" stroke="#555" stroke-width="0.5"/><rect x="2.5" y="5" width="3" height="2.5" fill="none" stroke="#555" stroke-width="0.5"/></svg><div class="t" style="left:45.5px;top:349.6px;color:#141414;font-size:6.4px;">Hole</div><svg class="a" style="left:15px;top:361px;" width="7" height="7" viewBox="0 0 7 7"><rect x="0.5" y="0.5" width="5" height="5" fill="#fff" stroke="#a8a8a8" stroke-width="0.8"/><path d="M1.5 3 H4.5 M3 1.5 V4.5" stroke="#2d5bb0" stroke-width="0.9"/></svg><div class="a" style="left:21px;top:364px;width:5px;height:1px;background:#d6d6d6;"></div><svg class="a" style="left:24px;top:359.7px;" width="10" height="10" viewBox="0 0 10 10"><rect x="0.5" y="3" width="7" height="5.5" fill="#3a3a3a"/><circle cx="2" cy="1.8" r="1.5" fill="#3a3a3a"/><circle cx="5.5" cy="1.8" r="1.5" fill="#3a3a3a"/><rect x="2" y="4.5" width="4" height="2.5" fill="#ddd"/></svg><div class="t" style="left:35px;top:359.2px;color:#141414;font-size:6.4px;">Cameras</div><svg class="a" style="left:15px;top:371px;" width="7" height="7" viewBox="0 0 7 7"><rect x="0.5" y="0.5" width="5" height="5" fill="#fff" stroke="#a8a8a8" stroke-width="0.8"/><path d="M1.5 3 H4.5 M3 1.5 V4.5" stroke="#2d5bb0" stroke-width="0.9"/></svg><div class="a" style="left:21px;top:374px;width:5px;height:1px;background:#d6d6d6;"></div><svg class="a" style="left:24px;top:369.3px;" width="10" height="10" viewBox="0 0 10 10"><path d="M1 1 L7 7" stroke="#4070c0" stroke-width="1.5"/><circle cx="6" cy="6.5" r="2" fill="#f0d050" stroke="#e04040" stroke-width="0.6"/></svg><div class="t" style="left:35px;top:368.8px;color:#141414;font-size:6.4px;">Lights</div><div class="a" style="left:11px;top:397px;width:115px;height:11.5px;background:#e6e6e6;"></div><div class="a" style="left:12px;top:397px;width:30.5px;height:11px;background:#ffffff;"></div><svg class="a" style="left:15px;top:399px;" width="6" height="7" viewBox="0 0 6 7"><path d="M3 0.5 V2.5 M2 3 L0.8 6 M4 3 L5.2 6" stroke="#5a8ac0" stroke-width="0.7"/></svg><div class="t" style="left:22px;top:398.0px;color:#333;font-size:6.6px;">Scene</div><svg class="a" style="left:47px;top:398.5px;" width="6" height="8" viewBox="0 0 6 8"><rect x="0.5" y="0.5" width="5" height="7" fill="#f4f4f4" stroke="#666" stroke-width="0.5"/><rect x="1" y="1" width="4" height="2" fill="#3a6ac0"/></svg><div class="t" style="left:55px;top:398.0px;color:#333;font-size:6.6px;">Properties</div><svg class="a" style="left:89px;top:398.5px;" width="8" height="8" viewBox="0 0 8 8"><circle cx="3.2" cy="3.2" r="2.5" fill="none" stroke="#3a6ac0" stroke-width="0.9"/><path d="M5 5 L7.5 7.5" stroke="#333" stroke-width="1"/></svg><div class="t" style="left:97px;top:398.0px;color:#333;font-size:6.6px;">Search</div><div class="a" style="left:125.5px;top:103px;width:2.5px;height:306px;background:#ececec;"></div><svg class="a" style="left:0;top:0" width="1024" height="555" viewBox="0 0 1024 555">
<defs>
<linearGradient id="vpbg" x1="0" y1="0" x2="0" y2="1"><stop offset="0" stop-color="#d3d3d3"/><stop offset="1" stop-color="#efefef"/></linearGradient>
<linearGradient id="g1" gradientUnits="userSpaceOnUse" x1="414.7" y1="202.4" x2="459.1" y2="283.0"><stop offset="0" stop-color="#8e8e97"/><stop offset="0.2" stop-color="#a8a8b1"/><stop offset="0.42" stop-color="#ececf7"/><stop offset="0.62" stop-color="#a6a6af"/><stop offset="1" stop-color="#83838c"/></linearGradient><linearGradient id="g2" gradientUnits="userSpaceOnUse" x1="479.0" y1="157.7" x2="531.0" y2="252.3"><stop offset="0" stop-color="#8e8e97"/><stop offset="0.2" stop-color="#a8a8b1"/><stop offset="0.42" stop-color="#ececf7"/><stop offset="0.62" stop-color="#a6a6af"/><stop offset="1" stop-color="#83838c"/></linearGradient><linearGradient id="g3" gradientUnits="userSpaceOnUse" x1="282.0" y1="300.8" x2="308.0" y2="348.2"><stop offset="0" stop-color="#8e8e97"/><stop offset="0.2" stop-color="#a8a8b1"/><stop offset="0.42" stop-color="#ececf7"/><stop offset="0.62" stop-color="#a6a6af"/><stop offset="1" stop-color="#83838c"/></linearGradient><linearGradient id="g4" gradientUnits="userSpaceOnUse" x1="320.5" y1="275.7" x2="349.5" y2="328.3"><stop offset="0" stop-color="#8e8e97"/><stop offset="0.2" stop-color="#a8a8b1"/><stop offset="0.42" stop-color="#ececf7"/><stop offset="0.62" stop-color="#a6a6af"/><stop offset="1" stop-color="#83838c"/></linearGradient>
<linearGradient id="ring1" gradientUnits="userSpaceOnUse" x1="460" y1="170" x2="520" y2="260"><stop offset="0" stop-color="#9a9aa2"/><stop offset="0.45" stop-color="#c9c9d4"/><stop offset="1" stop-color="#8a8a92"/></linearGradient>
<linearGradient id="ring3" gradientUnits="userSpaceOnUse" x1="300" y1="285" x2="340" y2="335"><stop offset="0" stop-color="#9a9aa2"/><stop offset="0.45" stop-color="#c9c9d4"/><stop offset="1" stop-color="#8a8a92"/></linearGradient>
<linearGradient id="ring2" gradientUnits="userSpaceOnUse" x1="500" y1="135" x2="560" y2="245"><stop offset="0" stop-color="#9a9aa2"/><stop offset="0.4" stop-color="#d8d8e4"/><stop offset="1" stop-color="#8a8a92"/></linearGradient>
<linearGradient id="rimS" gradientUnits="userSpaceOnUse" x1="440" y1="110" x2="470" y2="140"><stop offset="0" stop-color="#a0a0aa"/><stop offset="0.6" stop-color="#e6e6f0"/><stop offset="1" stop-color="#9a9aa3"/></linearGradient>
<linearGradient id="rimA" x1="0" y1="0" x2="1" y2="1"><stop offset="0" stop-color="#85858d"/><stop offset="0.5" stop-color="#dcdce8"/><stop offset="1" stop-color="#85858d"/></linearGradient>
<linearGradient id="rimB" x1="0" y1="0" x2="1" y2="0.6"><stop offset="0" stop-color="#8a8a92"/><stop offset="0.45" stop-color="#e2e2ee"/><stop offset="1" stop-color="#8a8a92"/></linearGradient>
<linearGradient id="rimB2" x1="0" y1="0" x2="1" y2="0.3"><stop offset="0" stop-color="#8a8a92"/><stop offset="0.5" stop-color="#e2e2ee"/><stop offset="1" stop-color="#8a8a92"/></linearGradient>
<clipPath id="vpc"><rect x="128" y="103" width="874.5" height="305.5"/></clipPath>
</defs>
<rect x="128" y="103" width="874.5" height="305.5" fill="url(#vpbg)"/>
<g clip-path="url(#vpc)" stroke="#3c3c42" stroke-width="0.7" stroke-linejoin="round">
<!-- union silhouette -->
<path fill="#797a84" d="M384 100 L380 109 Q378 116 380 124 C386 172 412 244 452 295 C492 343 545 382 603 386 C640 388 685 365 705 335 C712 322 716 312 716 303 C730 308 760 308 782 298 C810 285 845 262 855 235 C860 215 862 197 859 185 C857 177 852 171 847.2 168 L808.6 145.7 C795 135 782 118 776 100 Z"/>
<!-- web2 rim concave band top -->
<path fill="url(#rimB2)" d="M735 100 C742 125 752 150 776.2 164 L808.6 145.7 C795 135 782 118 776 100 Z"/>
<path fill="#9798a1" d="M776.2 164 L810.7 188.3 L847.2 168 L808.6 145.7 Z"/>
<path fill="url(#rimA)" d="M810.7 188.3 C817 193 822 200 824.9 212.6 L859.4 192.4 C859 183 854 174 847.2 168 Z"/>
<path fill="#8b8c95" d="M824.9 212.6 L859.4 192.4 C862 205 860 225 855 240 C845 262 815 285 782 298 C805 280 822 255 824.9 212.6 Z"/>
<!-- web1 rim top flat (A) -->
<path fill="#85858d" d="M606 100 L633 100 L633.3 159.5 L599.2 177.3 L597 168 Z"/>
<!-- web1 curved rim (B) -->
<path fill="url(#rimB)" d="M599.2 177.3 C599 200 608 222 633 247 L670.6 226 C655 214 642 200 636 180 L633.3 159.5 Z"/>
<!-- web1 rim flat (C) -->
<path fill="#97979f" d="M633 247 C645 256 660 263 673.8 268.2 L709.5 248.7 C695 242 680 234 670.6 226 Z"/>
<!-- web1 corner fillet (D) -->
<path fill="url(#rimA)" d="M673.8 268.2 C678 272 681 280 682 289.3 L720.9 271.4 C720 262 716 254 709.5 248.7 Z"/>
<!-- web1 side (E) -->
<path fill="#8b8c95" d="M686 291 L720.9 271.4 C722 285 720 295 716 303 C716 312 712 322 705 335 C685 365 640 388 603 386 C625 382 660 360 672 343 C680 330 688 305 686 291 Z"/>
<!-- web1 fillet strip -->
<g fill="none" stroke-linecap="butt">
<path stroke="#3c3c42" stroke-width="10.5" d="M604.5 100 L594.5 167 L594.4 178 C594 203 604 226 630 249.5 L671 272 C680 277 684 285 684 295 C684 315 680 330 672 343 C662 358 645 370 625 378 C617 381 611 382.5 604 383.5"/>
<path stroke="#8a8a94" stroke-width="9.3" d="M604.5 100 L594.5 167 L594.4 178 C594 203 604 226 630 249.5 L671 272 C680 277 684 285 684 295 C684 315 680 330 672 343 C662 358 645 370 625 378 C617 381 611 382.5 604 383.5"/>
<path stroke="#a3a3ad" stroke-width="6" d="M604.5 100 L594.5 167 L594.4 178 C594 203 604 226 630 249.5 L671 272 C680 277 684 285 684 295 C684 315 680 330 672 343 C662 358 645 370 625 378 C617 381 611 382.5 604 383.5"/>
<path stroke="#c2c2cc" stroke-width="2.6" d="M604.5 100 L594.5 167 L594.4 178 C594 203 604 226 630 249.5 L671 272 C680 277 684 285 684 295 C684 315 680 330 672 343 C662 358 645 370 625 378 C617 381 611 382.5 604 383.5"/>
</g>
<path fill="none" d="M589.6 166.8 H599.5 M589.5 178.6 L599.2 178.6 L633.3 159.5 M633 247 L670.6 226 M668 275 L673.8 268.2"/>
<path fill="none" stroke-width="0.6" d="M560 155 L590 167 M560 158 L590 170"/>
<!-- slot at top of web1 -->
<path fill="#9a9aa2" d="M384 100 L431 126 L468.5 108.5 L470 100 Z"/>
<path fill="url(#rimS)" d="M431 126 C436 133 446 140 455 142 C466 141 472 130 472 114 L472 100 L470 100 L468.5 108.5 Z"/>
<g fill="none">
<path stroke="#3c3c42" stroke-width="9" d="M381 112 Q383 106.5 389 107.5 L429 130 C440 137 448 140 455 140 C461 139.5 465 137 467.5 132"/>
<path stroke="#8e8e98" stroke-width="7.9" d="M381 112 Q383 106.5 389 107.5 L429 130 C440 137 448 140 455 140 C461 139.5 465 137 467.5 132"/>
<path stroke="#a6a6b0" stroke-width="5" d="M381 112 Q383 106.5 389 107.5 L429 130 C440 137 448 140 455 140 C461 139.5 465 137 467.5 132"/>
<path stroke="#c0c0ca" stroke-width="2.2" d="M381 112 Q383 106.5 389 107.5 L429 130 C440 137 448 140 455 140 C461 139.5 465 137 467.5 132"/>
</g>
<path fill="none" d="M431 126 L468.5 108.5 M427 126 L431 134 M455 144.5 C466 143 472 132 472 114 L472 100"/>
<!-- small ellipse at top -->
<path fill="#8c8c94" d="M522 100 C522 115 530 126 534 126 C540 126 551 112 551 100 Z"/>
<!-- web top lines -->
<path fill="none" d="M472 100 L590.3 167 M470 103.2 L590.3 170"/>
<ellipse cx="528" cy="191" rx="45" ry="62.4" transform="rotate(-18 528 191)" fill="url(#ring2)" /><ellipse cx="526.5" cy="193" rx="41" ry="59.5" transform="rotate(-18 526.5 193)" fill="#9898a2" /><path fill="url(#g2)" stroke="none" d="M470.18 164.31 L507.51 141.17 A37 56.6 -18 0 1 542.49 248.83 L501.82 261.69 A36.3 51.2 -18 0 1 470.18 164.31 Z"/><path fill="none" d="M470.18 164.31 L507.51 141.17 A37 56.6 -18 0 1 542.49 248.83 L501.82 261.69"/><ellipse cx="486" cy="213" rx="36.3" ry="51.2" transform="rotate(-18 486 213)" fill="url(#ring1)" /><path fill="url(#g1)" stroke="none" d="M375.67 227.01 L469.6 172.68 A33.5 46.6 -18 0 1 498.4 261.32 L407.53 308.29 A29.3 43.65 -21.4 0 1 375.67 227.01 Z"/><path fill="none" d="M375.67 227.01 L469.6 172.68 A33.5 46.6 -18 0 1 498.4 261.32 L407.53 308.29"/><ellipse cx="391.6" cy="267.65" rx="29.3" ry="43.65" transform="rotate(-21.4 391.6 267.65)" fill="#77777e" /><path fill="url(#g4)" stroke="none" d="M310.0 282.05 L335.8 267.59 A19 30 -24 0 1 360.2 322.41 L334.0 335.95 A21.5 29.5 -24 0 1 310.0 282.05 Z"/><path fill="none" d="M310.0 282.05 L335.8 267.59 A19 30 -24 0 1 360.2 322.41 L334.0 335.95"/><ellipse cx="322" cy="309" rx="21.5" ry="29.5" transform="rotate(-24 322 309)" fill="url(#ring3)" /><path fill="url(#g3)" stroke="none" d="M261.58 312.98 L307.19 286.09 A19.3 27.4 -24.6 0 1 330.01 335.91 L281.32 362.82 A17.7 26.8 -21.6 0 1 261.58 312.98 Z"/><path fill="none" d="M261.58 312.98 L307.19 286.09 A19.3 27.4 -24.6 0 1 330.01 335.91 L281.32 362.82"/><ellipse cx="271.45" cy="337.9" rx="17.7" ry="26.8" transform="rotate(-21.6 271.45 337.9)" fill="#77777e" />
</g>
<!-- axis triad -->
<g stroke="none">
<path d="M147.5 382 L145.5 386 H149.5Z" fill="#3a6ad8"/><rect x="147" y="385" width="1.2" height="5" fill="#6a9ae8"/>
<path d="M140 386 L146 389 L143 390 Z" fill="#1a9a1a"/><path d="M155 386 L149 389 L152 390 Z" fill="#a01818"/>
</g>
</svg><div class="t" style="left:146.5px;top:371.5px;color:#3a6ad8;font-size:5.5px;">Z</div><div class="t" style="left:135.5px;top:378.0px;color:#7ad07a;font-size:5px;">Y</div><div class="t" style="left:157px;top:378.0px;color:#e06060;font-size:5px;">X</div><div class="a" style="left:1002.5px;top:103px;width:17.5px;height:306px;background:#e8e8e8;"></div><div class="a" style="left:1015.5px;top:103px;width:3px;height:290px;background:#e1e1e1;"></div><div class="a" style="left:1003px;top:95.5px;width:0;height:0;"><div style="position:absolute;left:0;top:0;transform-origin:0 0;transform:translate(10px,0) rotate(90deg);font-size:6.8px;color:#444;white-space:nowrap;line-height:10px">Object Viewer</div></div><svg class="a" style="left:995px;top:96px;" width="6" height="4" viewBox="0 0 6 4"><path d="M0 0 H5 L2.5 3 Z" fill="#555"/></svg><div class="a" style="left:11px;top:408.5px;width:1009px;height:4px;background:#d0d0d0;"></div><div class="a" style="left:11px;top:412.5px;width:991.5px;height:14px;background:#e6e6e6;"></div><div class="t" style="left:13.5px;top:414.3px;color:#444;font-size:6.6px;">Shapes</div><svg class="a" style="left:984px;top:418px;" width="6" height="4" viewBox="0 0 6 4"><path d="M0 0 H5.5 L2.75 3 Z" fill="#666"/></svg><svg class="a" style="left:995px;top:415px;" width="5" height="8" viewBox="0 0 5 8"><rect x="1" y="0" width="3" height="5" fill="#999"/><path d="M2.5 5 V8 M0 5 H5" stroke="#999" stroke-width="0.8"/></svg><div class="a" style="left:11px;top:426px;width:991.5px;height:10px;background:#cbcbcb;"></div><div class="a" style="left:12px;top:426.5px;width:42px;height:9px;background:#e4e4e4;"></div><div class="a" style="left:12px;top:426.5px;width:42px;height:9px;border:0.6px solid #c4c4c4"></div><svg class="a" style="left:15px;top:427.5px;" width="6" height="7" viewBox="0 0 6 7"><path d="M0.5 0.5 H4 L5.5 2 V6.5 H0.5Z" fill="#fafafa" stroke="#777" stroke-width="0.5"/><path d="M1.5 2.5H4M1.5 4H4" stroke="#999" stroke-width="0.5"/></svg><div class="t" style="left:-63px;width:200px;text-align:center;top:426.5px;color:#222;font-size:6.5px;">New</div><div class="a" style="left:54px;top:426.5px;width:42px;height:9px;background:#e4e4e4;"></div><div class="a" style="left:54px;top:426.5px;width:42px;height:9px;border:0.6px solid #c4c4c4"></div><svg class="a" style="left:57px;top:427.5px;" width="6" height="7" viewBox="0 0 6 7"><path d="M0.5 0.5 H4 L5.5 2 V6.5 H0.5Z" fill="#fafafa" stroke="#777" stroke-width="0.5"/><path d="M1.5 2.5H4M1.5 4H4" stroke="#999" stroke-width="0.5"/></svg><div class="t" style="left:-21px;width:200px;text-align:center;top:426.5px;color:#222;font-size:6.5px;">Open</div><div class="a" style="left:97px;top:426.5px;width:42px;height:9px;background:#e4e4e4;"></div><div class="a" style="left:97px;top:426.5px;width:42px;height:9px;border:0.6px solid #c4c4c4"></div><svg class="a" style="left:100px;top:427.5px;" width="6" height="7" viewBox="0 0 6 7"><rect x="0" y="0" width="6" height="7" fill="#333"/><rect x="1" y="0.5" width="4" height="2.5" fill="#f0d060"/><rect x="1.5" y="4" width="3" height="3" fill="#ddd"/></svg><div class="t" style="left:22px;width:200px;text-align:center;top:426.5px;color:#222;font-size:6.5px;">Save</div><div class="a" style="left:140px;top:426.5px;width:42px;height:9px;background:#e4e4e4;"></div><div class="a" style="left:140px;top:426.5px;width:42px;height:9px;border:0.6px solid #c4c4c4"></div><svg class="a" style="left:143px;top:427.5px;" width="6" height="7" viewBox="0 0 6 7"><path d="M0.5 0.5 H4 L5.5 2 V6.5 H0.5Z" fill="#fafafa" stroke="#777" stroke-width="0.5"/><path d="M1.5 2.5H4M1.5 4H4" stroke="#999" stroke-width="0.5"/></svg><div class="t" style="left:65px;width:200px;text-align:center;top:426.5px;color:#222;font-size:6.5px;">Close</div><div class="a" style="left:11px;top:436px;width:991.5px;height:11px;background:#ffffff;"></div><div class="t" style="left:13px;top:436.3px;color:#555;font-size:6.5px;">Search ...</div><div class="a" style="left:993px;top:437px;width:9px;height:9px;background:#f3ebe4;"></div><svg class="a" style="left:994px;top:438px;" width="7" height="7" viewBox="0 0 7 7"><path d="M0.8 0.8 L6.2 6.2 M6.2 0.8 L0.8 6.2" stroke="#e83a3a" stroke-width="1.2"/></svg><div class="a" style="left:11px;top:447px;width:991.5px;height:70.5px;background:#fff;border:1px solid #a9adbb;border-left-color:#c8c8c8;border-bottom:none"></div><div class="a" style="left:993px;top:448px;width:9px;height:69px;background:#f0f0f0;"></div><div class="a" style="left:993.5px;top:458px;width:7.5px;height:49px;background:#cdcdcd;"></div><svg class="a" style="left:995px;top:450px;" width="6" height="4" viewBox="0 0 6 4"><path d="M0.5 3.5 L3 1 L5.5 3.5" stroke="#555" stroke-width="0.9" fill="none"/></svg><svg class="a" style="left:995px;top:510px;" width="6" height="4" viewBox="0 0 6 4"><path d="M0.5 0.5 L3 3 L5.5 0.5" stroke="#555" stroke-width="0.9" fill="none"/></svg><svg class="a" style="left:0;top:0" width="0" height="0"><defs><linearGradient id="sg" x1="0" y1="0" x2="1" y2="1"><stop offset="0" stop-color="#d8ebe6"/><stop offset="1" stop-color="#9fbdb6"/></linearGradient><linearGradient id="sg2" x1="0" y1="0" x2="1" y2="0"><stop offset="0" stop-color="#a8c4bd"/><stop offset="0.5" stop-color="#e4f2ee"/><stop offset="1" stop-color="#9ab8b1"/></linearGradient><radialGradient id="sph" cx="0.4" cy="0.35" r="0.7"><stop offset="0" stop-color="#f4fbf9"/><stop offset="1" stop-color="#8fb1aa"/></radialGradient></defs></svg><svg class="a" style="left:24px;top:450px;" width="16" height="16" viewBox="0 0 16 16"><path d="M2 4 L8 1.5 L14 4 V12 L8 15 L2 12Z" fill="#b9d2cc"/><path d="M2 4 L8 1.5 L14 4 L8 6.5Z" fill="#dcece8"/><path d="M8 6.5 V15 L14 12 V4Z" fill="#9ebcb5"/></svg><div class="t" style="left:-68px;width:200px;text-align:center;top:467.5px;color:#262626;font-size:6.5px;">Extrude</div><svg class="a" style="left:64px;top:450px;" width="16" height="16" viewBox="0 0 16 16"><path d="M1 6 L9 1 L15 7 L7 12Z" fill="#25338a"/><path d="M4 6 L9 3.5 L12.5 7 L7 9.5Z" fill="#e8eef8"/><path d="M4 6 L9 3.5 L10 5 L6 7.5Z" fill="#9aa8c8"/><path d="M7 12 L15 7 V8.5 L7 13.5Z" fill="#c8d0dc"/></svg><div class="t" style="left:-28px;width:200px;text-align:center;top:467.5px;color:#262626;font-size:6.5px;">Cut Extude</div><svg class="a" style="left:104px;top:450px;" width="16" height="16" viewBox="0 0 16 16"><path d="M1 3 L5 1 L15 12 L11 15Z" fill="#c2d9d3"/><path d="M11 15 L15 12 V13 L11 16Z" fill="#8fb0a8"/></svg><div class="t" style="left:12px;width:200px;text-align:center;top:467.5px;color:#262626;font-size:6.5px;">Slab</div><svg class="a" style="left:144px;top:450px;" width="16" height="16" viewBox="0 0 16 16"><path d="M4 2 L13 3 L12 13 L2 11Z" fill="#25338a"/><path d="M5.5 4 L11.5 4.5 L10.5 11 L4 10Z" fill="#dde4f0"/></svg><div class="t" style="left:52px;width:200px;text-align:center;top:467.5px;color:#262626;font-size:6.5px;">Cut Slab</div><svg class="a" style="left:184px;top:450px;" width="16" height="16" viewBox="0 0 16 16"><path d="M3 3 Q8 0 13 3 V12 Q8 15.5 3 12Z" fill="url(#sg2)"/><ellipse cx="8" cy="3.2" rx="5" ry="2" fill="#d6e8e3"/></svg><div class="t" style="left:92px;width:200px;text-align:center;top:467.5px;color:#262626;font-size:6.5px;">Slot</div><svg class="a" style="left:224px;top:450px;" width="16" height="16" viewBox="0 0 16 16"><path d="M1 5 L9 1 L15 9 L7 14Z" fill="#25338a"/><ellipse cx="8" cy="7.5" rx="4" ry="2" transform="rotate(40 8 7.5)" fill="#e6ecf6"/></svg><div class="t" style="left:132px;width:200px;text-align:center;top:467.5px;color:#262626;font-size:6.5px;">Cut Slot</div><svg class="a" style="left:264px;top:450px;" width="16" height="16" viewBox="0 0 16 16"><path d="M2.5 3.5 V12 Q8 15.5 13.5 12 V3.5Z" fill="url(#sg2)"/><ellipse cx="8" cy="3.5" rx="5.5" ry="2.3" fill="#d6e8e3"/></svg><div class="t" style="left:172px;width:200px;text-align:center;top:467.5px;color:#262626;font-size:6.5px;">Cylinder</div><svg class="a" style="left:304px;top:450px;" width="16" height="16" viewBox="0 0 16 16"><path d="M0.5 7 L8 1 L15.5 7 L8 13Z" fill="#25338a"/><ellipse cx="8" cy="7" rx="3.5" ry="2.5" fill="#e8eef6"/><path d="M4.5 7 Q8 4 11.5 7" fill="#8a98b8"/></svg><div class="t" style="left:212px;width:200px;text-align:center;top:467.5px;color:#262626;font-size:6.5px;">Cut Cylinder</div><svg class="a" style="left:344px;top:450px;" width="16" height="16" viewBox="0 0 16 16"><path d="M2 4.5 V12 Q8 15.5 14 11 V3.5Z" fill="url(#sg2)"/><ellipse cx="8" cy="4" rx="6" ry="2.5" transform="rotate(-12 8 4)" fill="#d6e8e3"/></svg><div class="t" style="left:252px;width:200px;text-align:center;top:467.5px;color:#262626;font-size:6.5px;">Ellipse</div><svg class="a" style="left:384px;top:450px;" width="16" height="16" viewBox="0 0 16 16"><path d="M0.5 7 L8 1 L15.5 7 L8 13Z" fill="#25338a"/><ellipse cx="8" cy="7" rx="3.5" ry="2.5" fill="#e8eef6"/><path d="M4.5 7 Q8 4 11.5 7" fill="#8a98b8"/></svg><div class="t" style="left:292px;width:200px;text-align:center;top:467.5px;color:#262626;font-size:6.5px;">Cut Ellipse</div><svg class="a" style="left:424px;top:450px;" width="16" height="16" viewBox="0 0 16 16"><path d="M1 5 L7 2 L13 3 L15 8 L10 14 L3 11Z" fill="#bcd4ce"/><path d="M7 2 L13 3 L15 8 L9 7Z" fill="#dcece8"/><path d="M9 7 L15 8 L10 14Z" fill="#9cbab3"/></svg><div class="t" style="left:332px;width:200px;text-align:center;top:467.5px;color:#262626;font-size:6.5px;">Poly</div><svg class="a" style="left:464px;top:450px;" width="16" height="16" viewBox="0 0 16 16"><path d="M4 1.5 L15 1.5 L12 13 L1 13Z" fill="#25338a"/><ellipse cx="8" cy="7.3" rx="3" ry="4.5" transform="rotate(25 8 7.3)" fill="#c8d2e4"/><path d="M12 13 L15 1.5 L16 4 L13.5 14Z" fill="#c8c8c8"/></svg><div class="t" style="left:372px;width:200px;text-align:center;top:467.5px;color:#262626;font-size:6.5px;">Cut Poly</div><svg class="a" style="left:504px;top:450px;" width="16" height="16" viewBox="0 0 16 16"><circle cx="8" cy="8" r="6.5" fill="url(#sph)"/><path d="M2 7 Q8 11 14 7" stroke="#8aa8a2" stroke-width="0.6" fill="none"/></svg><div class="t" style="left:412px;width:200px;text-align:center;top:467.5px;color:#262626;font-size:6.5px;">Sphere</div><svg class="a" style="left:544px;top:450px;" width="16" height="16" viewBox="0 0 16 16"><path d="M1 8 L8 2 H13 V12 L8 14Z" fill="#25338a"/><circle cx="10" cy="8" r="4.5" fill="#dbe3ef"/></svg><div class="t" style="left:452px;width:200px;text-align:center;top:467.5px;color:#262626;font-size:6.5px;">Cut Sphere</div><svg class="a" style="left:584px;top:450px;" width="16" height="16" viewBox="0 0 16 16"><path d="M2 2 L14 3 L12 12 L7 15Z" fill="#a9c6bf"/><path d="M2 2 L14 3 L7 6Z" fill="#d2e6e1"/><path d="M7 6 L14 3 L12 12 L7 15Z" fill="#8fb0a8"/></svg><div class="t" style="left:492px;width:200px;text-align:center;top:467.5px;color:#262626;font-size:6.5px;">Pie</div><svg class="a" style="left:624px;top:450px;" width="16" height="16" viewBox="0 0 16 16"><path d="M2 2 L11 0.5 V14 L2 15Z" fill="#25338a"/><circle cx="6" cy="8" r="2.5" fill="#e8eef6"/><ellipse cx="13" cy="6" rx="2.5" ry="3" fill="#d0d0d0"/></svg><div class="t" style="left:532px;width:200px;text-align:center;top:467.5px;color:#262626;font-size:6.5px;">Cut Pie</div><svg class="a" style="left:664px;top:450px;" width="16" height="16" viewBox="0 0 16 16"><circle cx="8" cy="8" r="6" fill="none" stroke="#a8c6bf" stroke-width="3"/><circle cx="8" cy="8" r="6" fill="none" stroke="#e0efeb" stroke-width="1"/></svg><div class="t" style="left:572px;width:200px;text-align:center;top:467.5px;color:#262626;font-size:6.5px;">Torus</div><svg class="a" style="left:704px;top:450px;" width="16" height="16" viewBox="0 0 16 16"><path d="M2 3 L14 1 L13 13 L1 14Z" fill="#25338a"/><circle cx="7.5" cy="7.5" r="3.8" fill="#c8d2e4"/><circle cx="7.5" cy="7.5" r="1.6" fill="#25338a"/></svg><div class="t" style="left:612px;width:200px;text-align:center;top:467.5px;color:#262626;font-size:6.5px;">Cut Torus</div><svg class="a" style="left:744px;top:450px;" width="16" height="16" viewBox="0 0 16 16"><path d="M15 1 L2 12 Q5 15 9 13Z" fill="url(#sg2)"/></svg><div class="t" style="left:652px;width:200px;text-align:center;top:467.5px;color:#262626;font-size:6.5px;">Cone</div><svg class="a" style="left:784px;top:450px;" width="16" height="16" viewBox="0 0 16 16"><path d="M5 1 H14 L12 13 L2 15Z" fill="#25338a"/><path d="M8 2 H13 L11.5 12 L4 13.5Z" fill="#d8e0ec"/></svg><div class="t" style="left:692px;width:200px;text-align:center;top:467.5px;color:#262626;font-size:6.5px;">Cut Cone</div><svg class="a" style="left:824px;top:450px;" width="16" height="16" viewBox="0 0 16 16"><path d="M8 1 L1 13 L10 15 L15 11Z" fill="#b2cec7"/><path d="M8 1 L10 15 L15 11Z" fill="#8fb0a8"/></svg><div class="t" style="left:732px;width:200px;text-align:center;top:467.5px;color:#262626;font-size:6.5px;">Pyramid</div><svg class="a" style="left:864px;top:450px;" width="16" height="16" viewBox="0 0 16 16"><path d="M6 1 H14 L13 13 L2 15Z" fill="#25338a"/><path d="M8 2.5 H12.5 L11.5 12 L4.5 13Z" fill="#d8e0ec"/></svg><div class="t" style="left:772px;width:200px;text-align:center;top:467.5px;color:#262626;font-size:6.5px;">Cut Pyramid</div><svg class="a" style="left:904px;top:450px;" width="16" height="16" viewBox="0 0 16 16"><path d="M4 2 Q12 0 15 5 Q14 13 8 15 Q2 12 2 7Z" fill="url(#sg)"/></svg><div class="t" style="left:812px;width:200px;text-align:center;top:467.5px;color:#262626;font-size:6.5px;">Part Cone</div><svg class="a" style="left:944px;top:450px;" width="16" height="16" viewBox="0 0 16 16"><path d="M5 1 H12 L11 10 L2 13Z" fill="#25338a"/><path d="M8 2 Q14 4 13 9 L10 12 L4 12Z" fill="#d8e0ec"/></svg><div class="t" style="left:852px;width:200px;text-align:center;top:467.5px;color:#333;font-size:6.5px;">Cut Part</div><div class="t" style="left:852px;width:200px;text-align:center;top:475.5px;color:#333;font-size:6.5px;">Cone</div><svg class="a" style="left:24px;top:489px;" width="16" height="16" viewBox="0 0 16 16"><path d="M1 4 L13 1 L15 4 L10 15 L3 12Z" fill="#cde4de"/><path d="M13 1 L15 4 L10 15 L9 5Z" fill="#9ebcb5"/></svg><div class="t" style="left:-68px;width:200px;text-align:center;top:507.0px;color:#262626;font-size:6.5px;">Bar</div><svg class="a" style="left:64px;top:489px;" width="16" height="16" viewBox="0 0 16 16"><path d="M2 1 L14 12 L11 15 L2 10Z" fill="#b2cec7"/><path d="M2 1 L14 12 L11 15Z" fill="#8fb0a8"/></svg><div class="t" style="left:-28px;width:200px;text-align:center;top:507.0px;color:#262626;font-size:6.5px;">Rib</div><svg class="a" style="left:104px;top:489px;" width="16" height="16" viewBox="0 0 16 16"><ellipse cx="9" cy="4" rx="6" ry="3.5" fill="#c6ddd7"/><path d="M5 6 Q8 10 6 14 Q9 15 11 13 Q9 9 11 6Z" fill="#9ebcb5"/></svg><div class="t" style="left:12px;width:200px;text-align:center;top:507.0px;color:#262626;font-size:6.5px;">L3 Circles</div><svg class="a" style="left:144px;top:489px;" width="16" height="16" viewBox="0 0 16 16"><path d="M3 2 L13 1 L11 8 L14 14 L4 15 L6 8Z" fill="#cde4de"/><path d="M6 8 L11 8 L14 14Z" fill="#9ebcb5"/></svg><div class="t" style="left:52px;width:200px;text-align:center;top:507.0px;color:#262626;font-size:6.5px;">Twist</div><svg class="a" style="left:184px;top:489px;" width="16" height="16" viewBox="0 0 16 16"><path d="M14 1 L2 13 L13 15Z" fill="#c0d8d2"/><path d="M9 8 L8 14" stroke="#3a60c0" stroke-width="0.6"/></svg><div class="t" style="left:92px;width:200px;text-align:center;top:507.0px;color:#262626;font-size:6.5px;">Slab2</div><svg class="a" style="left:224px;top:489px;" width="16" height="16" viewBox="0 0 16 16"><ellipse cx="8" cy="8" rx="7" ry="6" fill="url(#sg2)"/><path d="M6 6 L7 14" stroke="#3a60c0" stroke-width="0.6"/></svg><div class="t" style="left:132px;width:200px;text-align:center;top:507.0px;color:#262626;font-size:6.5px;">Cylinder2</div><svg class="a" style="left:264px;top:489px;" width="16" height="16" viewBox="0 0 16 16"><circle cx="8" cy="8" r="6.5" fill="url(#sph)"/><path d="M6 14 Q8 15 10 14" stroke="#e03030" stroke-width="1"/><path d="M8 5 L7 9" stroke="#3a60c0" stroke-width="0.6"/></svg><div class="t" style="left:172px;width:200px;text-align:center;top:507.0px;color:#262626;font-size:6.5px;">Sphere2</div><svg class="a" style="left:304px;top:489px;" width="16" height="16" viewBox="0 0 16 16"><path d="M3 3 Q12 0 14 12 L10 14 Q9 6 3 6Z" fill="url(#sg2)"/></svg><div class="t" style="left:212px;width:200px;text-align:center;top:507.0px;color:#262626;font-size:6.5px;">Partial Torus</div><svg class="a" style="left:344px;top:489px;" width="16" height="16" viewBox="0 0 16 16"><ellipse cx="8" cy="8" rx="7" ry="4.5" transform="rotate(-20 8 8)" fill="url(#sph)"/></svg><div class="t" style="left:252px;width:200px;text-align:center;top:507.0px;color:#262626;font-size:6.5px;">Ellipsoid</div><svg class="a" style="left:384px;top:489px;" width="16" height="16" viewBox="0 0 16 16"><path d="M6 2 H14 L10 15 H1Z" fill="#25338a"/><path d="M4 13 Q7 5 13 3 L10 14Z" fill="#d8e0ec"/></svg><div class="t" style="left:292px;width:200px;text-align:center;top:507.0px;color:#262626;font-size:6.5px;">Cut Ellipsoid</div><div class="a" style="left:11px;top:517px;width:991.5px;height:10.5px;background:#cdcdcd;"></div><div class="a" style="left:12px;top:518.5px;width:30px;height:9.5px;background:#d6d6d6;"></div><div class="a" style="left:13px;top:519px;width:9.5px;height:8.5px;background:#ececec;"></div><svg class="a" style="left:14px;top:520px;" width="8" height="6" viewBox="0 0 8 6"><path d="M0.5 3 L3.5 0.5 V2 H7.5 V4 H3.5 V5.5Z" fill="#b8b8b8"/></svg><div class="t" style="left:24.5px;top:518.0px;color:#999;font-size:6.5px;">Back</div><div class="a" style="left:44.5px;top:518.5px;width:63px;height:9.5px;background:#e2e2e2;"></div><div class="t" style="left:-24px;width:200px;text-align:center;top:518.2px;color:#1a1a1a;font-size:5.6px;">More Catalogs</div><div class="a" style="left:11px;top:527.5px;width:991.5px;height:13.5px;background:#e6e6e6;"></div><div class="a" style="left:37px;top:528.5px;width:25.5px;height:12px;background:#ffffff;"></div><div class="t" style="left:14px;top:529.5px;color:#444;font-size:6.5px;">Starter</div><div class="t" style="left:39.5px;top:529.5px;color:#444;font-size:6.5px;">Shapes</div><div class="t" style="left:66px;top:529.5px;color:#444;font-size:6.5px;">Advshaps</div><div class="t" style="left:100px;top:529.5px;color:#444;font-size:6.5px;">FlexShapes</div><div class="t" style="left:138px;top:529.5px;color:#444;font-size:6.5px;">Sheet Metal</div><div class="t" style="left:177.5px;top:529.5px;color:#444;font-size:6.5px;">Materials</div><div class="t" style="left:210.5px;top:529.5px;color:#444;font-size:6.5px;">Animations</div><div class="t" style="left:250px;top:529.5px;color:#444;font-size:6.5px;">Tools</div><div class="t" style="left:272px;top:529.5px;color:#444;font-size:6.5px;">Surfaces</div><div class="t" style="left:302.5px;top:529.5px;color:#444;font-size:6.5px;">Textures</div><div class="t" style="left:333px;top:529.5px;color:#444;font-size:6.5px;">Bumps</div><div class="t" style="left:359px;top:529.5px;color:#444;font-size:6.5px;">Colors</div><div class="t" style="left:384px;top:529.5px;color:#444;font-size:6.5px;">Steel Frames</div><div class="t" style="left:427px;top:529.5px;color:#444;font-size:6.5px;">Tank</div><div class="t" style="left:447px;top:529.5px;color:#444;font-size:6.5px;">ICM Add-on</div><div class="t" style="left:489px;top:529.5px;color:#444;font-size:6.5px;">ICM Mech</div><div class="t" style="left:525px;top:529.5px;color:#444;font-size:6.5px;">ICM Tools</div><div class="t" style="left:560px;top:529.5px;color:#444;font-size:6.5px;">ICM Utils</div><div class="t" style="left:593px;top:529.5px;color:#444;font-size:6.5px;">ICM Pipes</div><div class="t" style="left:628px;top:529.5px;color:#444;font-size:6.5px;">ICM Flanges</div><div class="t" style="left:670px;top:529.5px;color:#444;font-size:6.5px;">ICM Mold</div><div class="t" style="left:704.5px;top:529.5px;color:#444;font-size:6.5px;">ICM Arch</div><svg class="a" style="left:994px;top:533px;" width="7" height="4" viewBox="0 0 7 4"><path d="M0 0 H6.5 L3.25 3.5 Z" fill="#666"/></svg><div class="a" style="left:0px;top:541px;width:1020px;height:12.5px;background:#fafafa;"></div><div class="a" style="left:0px;top:553px;width:1024px;height:2px;background:#5a88c8;"></div><div class="a" style="left:0px;top:553px;width:25px;height:2px;background:#3a4660;"></div><div class="t" style="left:0px;top:543.0px;color:#222;font-size:5.9px;">For Help, press F1</div><div class="t" style="left:517px;top:542.3px;color:#333;font-size:6.3px;">View size: 1642 x  575</div><div class="a" style="left:590px;top:543px;width:1px;height:2px;background:#d0a000;"></div><div class="a" style="left:591.5px;top:543px;width:3px;height:9px;background:#f2cf1a;"></div><div class="a" style="left:591.5px;top:543px;width:3px;height:9px;background:#f2cf1a;border:0.5px solid #8a7010;"></div><div class="t" style="left:597px;top:542.3px;color:#111;font-size:6.3px;font-weight:bold">Units:</div><div class="t" style="left:621px;top:542.3px;color:#333;font-size:6.5px;">mm, deg</div><svg class="a" style="left:654px;top:543.5px;" width="8" height="8" viewBox="0 0 8 8"><circle cx="3" cy="3" r="2.3" fill="none" stroke="#555" stroke-width="0.8"/><path d="M4.7 4.7 L7 7" stroke="#555" stroke-width="1"/></svg><svg class="a" style="left:667px;top:543.5px;" width="8" height="8" viewBox="0 0 8 8"><circle cx="3" cy="3" r="2.3" fill="none" stroke="#555" stroke-width="0.8"/><path d="M4.7 4.7 L7 7" stroke="#555" stroke-width="1"/></svg><div class="t" style="left:677.5px;top:541.5px;color:#444;font-size:5px;">▾</div><svg class="a" style="left:685px;top:543.5px;" width="8" height="8" viewBox="0 0 8 8"><path d="M0.5 3 L3 1 H7.5 V5.5 L5 7.5 H0.5Z" fill="#f2cf1a" stroke="#8a7010" stroke-width="0.5"/></svg><div class="t" style="left:695.5px;top:541.5px;color:#444;font-size:5px;">▾</div><svg class="a" style="left:703px;top:543.5px;" width="8" height="8" viewBox="0 0 8 8"><path d="M0.5 2.5 L2.5 0.5 H7.5 V6 L5.5 8 H0.5Z" fill="#3a78d0" stroke="#1a4a90" stroke-width="0.5"/><path d="M0.5 2.5 H5.5 V8 M5.5 2.5 L7.5 0.5" stroke="#9cc0ee" stroke-width="0.5" fill="none"/></svg><div class="t" style="left:713.5px;top:541.5px;color:#444;font-size:5px;">▾</div><svg class="a" style="left:722px;top:543.5px;" width="8" height="8" viewBox="0 0 8 8"><path d="M0 5 H7 M4 1 V8" stroke="#3a6ac0" stroke-width="0.8"/><rect x="4" y="4.5" width="3" height="3" fill="#555"/></svg><div class="t" style="left:732.5px;top:541.5px;color:#444;font-size:5px;">▾</div><svg class="a" style="left:743px;top:543.5px;" width="8" height="8" viewBox="0 0 8 8"><path d="M0.5 3 L3 1 H7.5 V5.5 L5 7.5 H0.5Z" fill="#5a8ad8" stroke="#2a5aa0" stroke-width="0.5"/></svg><svg class="a" style="left:757px;top:543.5px;" width="8" height="8" viewBox="0 0 8 8"><path d="M1 6 Q2 1 6 2 L7 6" stroke="#aaa" stroke-width="0.8" fill="none"/></svg><svg class="a" style="left:770px;top:543.5px;" width="8" height="8" viewBox="0 0 8 8"><path d="M0.5 2.5 L2.5 0.5 H7.5 V6 L5.5 8 H0.5Z" fill="#3a78d0" stroke="#1a4a90" stroke-width="0.5"/><path d="M0.5 2.5 H5.5 V8 M5.5 2.5 L7.5 0.5" stroke="#9cc0ee" stroke-width="0.5" fill="none"/></svg><div class="t" style="left:780.5px;top:541.5px;color:#444;font-size:5px;">▾</div><svg class="a" style="left:790px;top:543.5px;" width="8" height="8" viewBox="0 0 8 8"><path d="M2 7 L1 3 M3 7 V1 M5 7 V2 M6.5 7 L7 4" stroke="#999" stroke-width="0.8"/></svg><svg class="a" style="left:817px;top:543.5px;" width="8" height="8" viewBox="0 0 8 8"><path d="M2 1 V7.5 L3.5 6 L5 8 L6 7.5 L4.5 5.5 H6.5Z" fill="#fff" stroke="#bbb" stroke-width="0.5"/></svg><svg class="a" style="left:1010px;top:543.5px;" width="8" height="8" viewBox="0 0 8 8"><path d="M7 2 V7 M4.5 4.5 V7 M2 7 H7" stroke="#bbb" stroke-width="0.7" stroke-dasharray="1 1"/></svg><div class="a" style="left:799px;top:542px;width:13px;height:11px;background:#d6d6d6;"></div><svg class="a" style="left:801.5px;top:543.5px;" width="8" height="8" viewBox="0 0 8 8"><path d="M2 1 V7.5 L3.5 6 L5 8 L6 7.5 L4.5 5.5 H6.5Z" fill="#fff" stroke="#444" stroke-width="0.5"/></svg><div class="a" style="left:824px;top:542.5px;width:72px;height:10.5px;background:#fff;border:0.6px solid #d0d0d0"></div><div class="t" style="left:826px;top:542.8px;color:#222;font-size:6.5px;">Drilldown: Intellishape</div><div class="t" style="left:891px;top:542.0px;color:#777;font-size:5px;">▾</div><div class="a" style="left:898px;top:542.5px;width:97px;height:10.5px;background:#fff;border:0.6px solid #d0d0d0"></div><div class="t" style="left:900px;top:542.8px;color:#222;font-size:6.5px;">Default</div><div class="t" style="left:989px;top:542.0px;color:#777;font-size:5px;">▾</div><svg class="a" style="left:998px;top:543.5px;" width="8" height="8" viewBox="0 0 8 8"><circle cx="4" cy="1.5" r="1.5" fill="#d02020"/><path d="M4 3 L1 6 M4 3 L7 6" stroke="#3a6ac0" stroke-width="0.8"/><rect x="0" y="5.5" width="3" height="2.5" fill="#3a6ac0"/><rect x="5" y="5.5" width="3" height="2.5" fill="#f2cf1a"/></svg>
</body></html>
